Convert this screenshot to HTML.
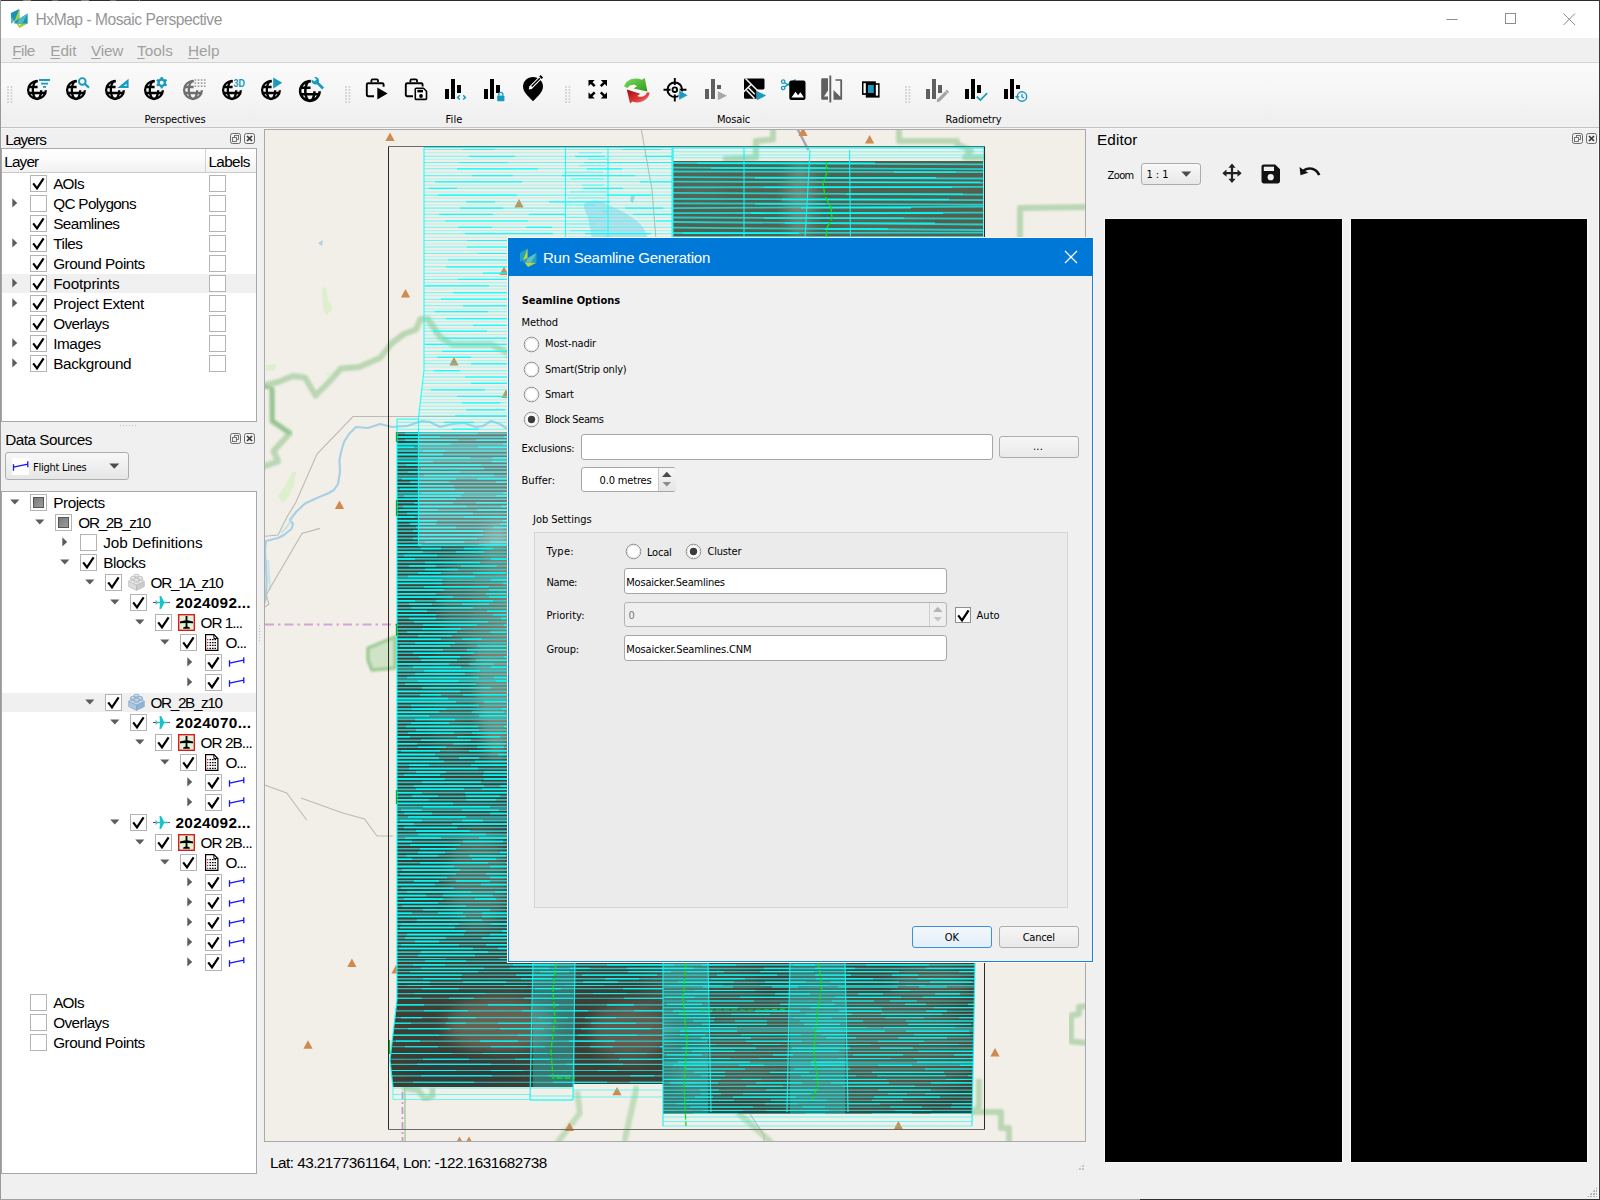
<!DOCTYPE html>
<html lang="en"><head><meta charset="utf-8"><title>HxMap - Mosaic Perspective</title>
<style>
html,body{margin:0;padding:0;}
body{width:1600px;height:1200px;overflow:hidden;background:#f0f0f0;font-family:"Liberation Sans",sans-serif;}
#win{position:absolute;left:0;top:0;width:1600px;height:1200px;overflow:hidden;background:#f0f0f0;}
.t{position:absolute;white-space:nowrap;}
.a{position:absolute;}
svg{position:absolute;overflow:visible;}
.cb{position:absolute;width:15px;height:15px;border:1px solid #b4b4b4;background:#fff;}
.cb svg{left:0;top:0;}
u{text-decoration-thickness:1px;text-underline-offset:2px;}

</style></head>
<body>
<div id="win">
<!-- title bar -->
<div class="" style="position:absolute;left:0px;top:0px;width:1600px;height:38px;background:#fff;"></div>
<div class="" style="position:absolute;left:0px;top:0px;width:1600px;height:1px;background:repeating-linear-gradient(90deg,#3a3a3a 0 23px,#8a8478 23px 31px,#2d2d2d 31px 52px,#6f6a60 52px 58px);"></div>
<div class="" style="position:absolute;left:140px;top:0px;width:1460px;height:1px;background:#2b2b2b;"></div>
<div class="" style="position:absolute;left:0px;top:0px;width:1px;height:1200px;background:#9a9a9a;"></div>
<div class="" style="position:absolute;left:1599px;top:0px;width:1px;height:1200px;background:#3c3c3c;"></div>
<div class="" style="position:absolute;left:1598px;top:38px;width:1px;height:1162px;background:#fafafa;"></div>
<div class="" style="position:absolute;left:0px;top:1199px;width:1600px;height:1px;background:#a2a2a2;"></div>
<div class="" style="position:absolute;left:1140px;top:1199px;width:460px;height:1px;background:#2f2f2f;"></div>
<svg style="left:10px;top:8px" width="19" height="22" viewBox="0 0 19 22">
<polygon points="1,5 9.3,1 9.3,11 1,15.5" fill="#1a93b8"/>
<polygon points="9.3,1 9.3,11 4,14" fill="#9ccf3a"/>
<polygon points="1,9 4.5,12.5 1,15.5" fill="#4fb9c6"/>
<polygon points="6,15 9.6,20 17.6,15.6 17.6,14" fill="#9ccf3a"/>
<polygon points="4.3,13.8 17.6,5.6 17.6,15.6 4.3,15.6" fill="#1a93b8"/>
<polygon points="9.3,10.8 17.6,5.6 12.5,15.6 7,15.6" fill="#4fb9c6"/>
<polygon points="2.3,14.6 4.6,12.4 4.2,14.2" fill="#fff"/>
<polygon points="8.6,16 10.6,16 9.6,17.6" fill="#fff"/>
</svg>
<div class="t " style="left:35.50px;top:8.50px;font-size:15.60px;line-height:22px;height:22px;color:#969696;letter-spacing:-0.463px;">HxMap - Mosaic Perspective</div>
<svg style="left:1440px;top:6px" width="150" height="28" viewBox="0 0 150 28" fill="none" stroke="#8c8c8c" stroke-width="1">
<path d="M6.5 13.5H17.5"/><rect x="65.5" y="7.5" width="10" height="10"/><path d="M123.5 7.5L135 19M135 7.5L123.5 19"/></svg>
<!-- menu bar -->
<div class="" style="position:absolute;left:1px;top:38px;width:1598px;height:24px;background:#f0f0f0;"></div>
<div class="t" style="left:12.3px;top:41px;font-size:15.300px;line-height:20px;color:#a0a0a0;letter-spacing:-0.538px"><u>F</u>ile</div>
<div class="t" style="left:50.3px;top:41px;font-size:15.300px;line-height:20px;color:#a0a0a0;letter-spacing:-0.091px"><u>E</u>dit</div>
<div class="t" style="left:91px;top:41px;font-size:15.300px;line-height:20px;color:#a0a0a0;letter-spacing:-0.222px"><u>V</u>iew</div>
<div class="t" style="left:137px;top:41px;font-size:15.300px;line-height:20px;color:#a0a0a0;letter-spacing:0.056px"><u>T</u>ools</div>
<div class="t" style="left:188px;top:41px;font-size:15.300px;line-height:20px;color:#a0a0a0;letter-spacing:0.008px"><u>H</u>elp</div>
<div class="" style="position:absolute;left:1px;top:62px;width:1598px;height:1px;background:#d4d4d4;"></div>
<!-- tool bar -->
<div class="" style="position:absolute;left:1px;top:63px;width:1598px;height:64px;background:linear-gradient(#fafafa,#f6f6f6 45%,#f0f0f0 85%,#f0f0f0);"></div>
<div class="" style="position:absolute;left:1px;top:127px;width:1598px;height:1px;background:#c4c4c4;"></div>
<div class="" style="position:absolute;left:1px;top:128px;width:1598px;height:1px;background:#f6f6f6;"></div>
<div class="" style="position:absolute;left:7px;top:86px;width:6px;height:18px;background:radial-gradient(circle at 1px 1px,#cfcfcf 0.7px,transparent 0.9px) 0 0/3.500px 3px;"></div>
<div class="" style="position:absolute;left:345px;top:86px;width:6px;height:18px;background:radial-gradient(circle at 1px 1px,#cfcfcf 0.7px,transparent 0.9px) 0 0/3.500px 3px;"></div>
<div class="" style="position:absolute;left:565px;top:86px;width:6px;height:18px;background:radial-gradient(circle at 1px 1px,#cfcfcf 0.7px,transparent 0.9px) 0 0/3.500px 3px;"></div>
<div class="" style="position:absolute;left:905px;top:86px;width:6px;height:18px;background:radial-gradient(circle at 1px 1px,#cfcfcf 0.7px,transparent 0.9px) 0 0/3.500px 3px;"></div>
<svg width="0" height="0"><defs><clipPath id="gc"><path d="M0 0H11.6V12.2H24V24H0Z"/></clipPath></defs></svg>
<svg style="left:26px;top:78px" width="28" height="26" viewBox="0 0 28 26"><g clip-path="url(#gc)" fill="none" stroke="#000" stroke-width="2.3"><circle cx="11" cy="12" r="8.900"/><ellipse cx="11" cy="12" rx="4.2" ry="9"/><path d="M2.3 9H20M2.3 15H20"/></g><path d="M13 1h11v1.9H13zM15 4.7h7v1.7h-7zM17 8.1h3v1.7h-3z" fill="#1a9abf"/></svg>
<svg style="left:65px;top:78px" width="28" height="26" viewBox="0 0 28 26"><g clip-path="url(#gc)" fill="none" stroke="#000" stroke-width="2.3"><circle cx="11" cy="12" r="8.900"/><ellipse cx="11" cy="12" rx="4.2" ry="9"/><path d="M2.3 9H20M2.3 15H20"/></g><circle cx="17.3" cy="3.4" r="3.3" fill="none" stroke="#1a9abf" stroke-width="1.9"/><path d="M19.8 5.9L24 9.6" stroke="#1a9abf" stroke-width="2.1"/></svg>
<svg style="left:104px;top:78px" width="28" height="26" viewBox="0 0 28 26"><g clip-path="url(#gc)" fill="none" stroke="#000" stroke-width="2.3"><circle cx="11" cy="12" r="8.900"/><ellipse cx="11" cy="12" rx="4.2" ry="9"/><path d="M2.3 9H20M2.3 15H20"/></g><path d="M24.6 0.8V10H13.4zM22.6 5.8V8.1H19.8z" fill="#1a9abf" fill-rule="evenodd"/></svg>
<svg style="left:143px;top:78px" width="28" height="26" viewBox="0 0 28 26"><g clip-path="url(#gc)" fill="none" stroke="#000" stroke-width="2.3"><circle cx="11" cy="12" r="8.900"/><ellipse cx="11" cy="12" rx="4.2" ry="9"/><path d="M2.3 9H20M2.3 15H20"/></g><g transform="translate(18.7 4.7)"><circle r="3.2" fill="none" stroke="#1a9abf" stroke-width="2.4"/><rect x="-1.1" y="-5.7" width="2.2" height="2.4" fill="#1a9abf" transform="rotate(0)"/><rect x="-1.1" y="-5.7" width="2.2" height="2.4" fill="#1a9abf" transform="rotate(60)"/><rect x="-1.1" y="-5.7" width="2.2" height="2.4" fill="#1a9abf" transform="rotate(120)"/><rect x="-1.1" y="-5.7" width="2.2" height="2.4" fill="#1a9abf" transform="rotate(180)"/><rect x="-1.1" y="-5.7" width="2.2" height="2.4" fill="#1a9abf" transform="rotate(240)"/><rect x="-1.1" y="-5.7" width="2.2" height="2.4" fill="#1a9abf" transform="rotate(300)"/></g></svg>
<svg style="left:182px;top:78px" width="28" height="26" viewBox="0 0 28 26"><g clip-path="url(#gc)" fill="none" stroke="#6e6e6e" stroke-width="2.3"><circle cx="11" cy="12" r="8.900"/><ellipse cx="11" cy="12" rx="4.2" ry="9"/><path d="M2.3 9H20M2.3 15H20"/></g><rect x="12.6" y="1.2" width="1.6" height="1.6" fill="#9a9a9a"/><rect x="12.6" y="4.3" width="1.6" height="1.6" fill="#9a9a9a"/><rect x="12.6" y="7.4" width="1.6" height="1.6" fill="#9a9a9a"/><rect x="15.7" y="1.2" width="1.6" height="1.6" fill="#9a9a9a"/><rect x="15.7" y="4.3" width="1.6" height="1.6" fill="#9a9a9a"/><rect x="15.7" y="7.4" width="1.6" height="1.6" fill="#9a9a9a"/><rect x="18.8" y="1.2" width="1.6" height="1.6" fill="#9a9a9a"/><rect x="18.8" y="4.3" width="1.6" height="1.6" fill="#9a9a9a"/><rect x="18.8" y="7.4" width="1.6" height="1.6" fill="#9a9a9a"/><rect x="21.9" y="1.2" width="1.6" height="1.6" fill="#9a9a9a"/><rect x="21.9" y="4.3" width="1.6" height="1.6" fill="#9a9a9a"/><rect x="21.9" y="7.4" width="1.6" height="1.6" fill="#9a9a9a"/></svg>
<svg style="left:221px;top:78px" width="28" height="26" viewBox="0 0 28 26"><g clip-path="url(#gc)" fill="none" stroke="#000" stroke-width="2.3"><circle cx="11" cy="12" r="8.900"/><ellipse cx="11" cy="12" rx="4.2" ry="9"/><path d="M2.3 9H20M2.3 15H20"/></g><text x="12.6" y="8.8" font-family="Liberation Sans,sans-serif" font-weight="bold" font-size="10.5" fill="#1a9abf" textLength="11.5" lengthAdjust="spacingAndGlyphs">3D</text></svg>
<svg style="left:260px;top:78px" width="28" height="26" viewBox="0 0 28 26"><g clip-path="url(#gc)" fill="none" stroke="#000" stroke-width="2.3"><circle cx="11" cy="12" r="8.900"/><ellipse cx="11" cy="12" rx="4.2" ry="9"/><path d="M2.3 9H20M2.3 15H20"/></g><path d="M13.2 -0.6L22.2 4.8L13.2 10.4z" fill="#1a9abf"/></svg>
<svg style="left:299px;top:78px" width="28" height="26" viewBox="0 0 28 26"><g transform="translate(-1.2 -0.2) scale(1.1)"><g clip-path="url(#gc)" fill="none" stroke="#000" stroke-width="2.3"><circle cx="11" cy="12" r="8.900"/><ellipse cx="11" cy="12" rx="4.2" ry="9"/><path d="M2.3 9H20M2.3 15H20"/></g></g><path d="M12.6 1.6a3.9 3.9 0 0 0 5.3 4.6l5.3 5.2 1.9-1.9-5.3-5.2a3.9 3.9 0 0 0-4.7-5.2l2.4 2.4-1.9 2z" fill="#1a9abf"/></svg>
<svg style="left:365px;top:78px" width="28" height="26" viewBox="0 0 28 26"><path d="M6.4 4.2V2.6a1.2 1.2 0 0 1 1.2-1.2h4.2a1.2 1.2 0 0 1 1.2 1.2v1.6" fill="none" stroke="#000" stroke-width="1.8"/><path d="M9 18.2H3.2a1.4 1.4 0 0 1-1.4-1.4V6.6a1.4 1.4 0 0 1 1.4-1.4h14a1.4 1.4 0 0 1 1.4 1.4v2.2" fill="none" stroke="#000" stroke-width="1.9"/><path d="M12.3 9.6L22.6 15.6L12.3 21.6z" fill="#000"/></svg>
<svg style="left:404px;top:78px" width="28" height="26" viewBox="0 0 28 26"><path d="M6.4 4.2V2.6a1.2 1.2 0 0 1 1.2-1.2h4.2a1.2 1.2 0 0 1 1.2 1.2v1.6" fill="none" stroke="#000" stroke-width="1.8"/><path d="M9 18.2H3.2a1.4 1.4 0 0 1-1.4-1.4V6.6a1.4 1.4 0 0 1 1.4-1.4h14a1.4 1.4 0 0 1 1.4 1.4v2" fill="none" stroke="#000" stroke-width="1.9"/><path d="M12.2 10.3h7.3l3 3v7.2a.9.9 0 0 1-.9.9h-9.4a.9.9 0 0 1-.9-.9v-9.3a.9.9 0 0 1 .9-.9z" fill="#fff" stroke="#000" stroke-width="1.6"/><rect x="13.4" y="11.8" width="5.6" height="2.6" fill="#000"/><circle cx="17" cy="18" r="1.9" fill="#000"/></svg>
<svg style="left:444px;top:78px" width="28" height="26" viewBox="0 0 28 26"><path d="M1 11h4v10H1zM7 1h4v20H7zM13 7h4v8h-4z" fill="#000"/><path d="M15.8 17.3l-2.2 2.1 2.2 2.1M19.2 17.3l2.2 2.1-2.2 2.1" fill="none" stroke="#1a9abf" stroke-width="1.5"/></svg>
<svg style="left:483px;top:78px" width="28" height="26" viewBox="0 0 28 26"><path d="M1 11h4v10H1zM7 1h4v20H7zM13 7h4v8h-4z" fill="#000"/><rect x="14.2" y="17.4" width="7.2" height="5.8" rx="0.8" fill="#1a9abf"/><path d="M15.8 17.6v-1.2a2 2 0 0 1 4 0v1.2" fill="none" stroke="#1a9abf" stroke-width="1.4"/></svg>
<svg style="left:521px;top:78px" width="30" height="26" viewBox="0 0 30 26"><path d="M12 -1c5.500 0 10 4.200 10 9.600 0 5-4.500 9.500-10 14.600C6.500 18.100 2 13.600 2 8.600 2 3.200 6.500 -1 12 -1z" fill="#000"/><path d="M7.800 11.400l.500-3 9.300-9.300 2.500 2.500-9.300 9.300z" fill="#fff"/><path d="M10.700 8.500l8.200-8.200" stroke="#000" stroke-width="1.500"/><path d="M18.200 -1.600l1.400-1.400 2.500 2.500-1.400 1.400z" fill="#000"/></svg>
<svg style="left:587px;top:78px" width="28" height="26" viewBox="0 0 28 26"><path d="M1.5 2h6.200L5.500 4.200 8.600 7.300 6.800 9.100 3.700 6 1.500 8.200zM20 2v6.200L17.800 6l-3.100 3.100-1.800-1.800L16 4.200 13.800 2zM1.500 20.500v-6.200L3.700 16.500l3.100-3.100 1.800 1.800-3.100 3.100 2.200 2.200zM20 20.500h-6.200l2.200-2.200-3.100-3.100 1.800-1.800 3.100 3.100 2.200-2.200z" fill="#000"/></svg>
<svg style="left:622px;top:78px" width="30" height="28" viewBox="0 0 30 28"><defs><linearGradient id="gg" x1="0" y1="0" x2="1" y2="1"><stop offset="0" stop-color="#7ddc5a"/><stop offset="1" stop-color="#2d9a1e"/></linearGradient><linearGradient id="rg" x1="0" y1="0" x2="1" y2="1"><stop offset="0" stop-color="#9c0d0d"/><stop offset=".6" stop-color="#e03a3a"/><stop offset="1" stop-color="#f29a9a"/></linearGradient></defs><path d="M2.300 8.500C3.500 2 12-1.500 20 1.800l2.800-1.800 2.600 13.600-13.800-3.200 3.300-2.100C12.500 6 8 6.300 5.500 10z" fill="url(#gg)"/><path d="M27.600 14.600C26.800 22 18.500 26.500 10.500 23.500l-2.500 2-3.200-14 13.500 4.200-3 2.200c3.500 1.800 8 1.200 9.600-3.300z" fill="url(#rg)"/></svg>
<svg style="left:665px;top:78px" width="28" height="26" viewBox="0 0 28 26"><circle cx="9.800" cy="11.700" r="7.300" fill="none" stroke="#000" stroke-width="2"/><circle cx="9.800" cy="11.700" r="2.300" fill="none" stroke="#000" stroke-width="1.800"/><path d="M9.800 0v7M9.800 16.500v7M-1.500 11.700h7M14.500 11.700h7" stroke="#000" stroke-width="1.900"/><path d="M13.800 11.900L23.200 17.200L13.800 22.200z" fill="#1a9abf" stroke="#f4f4f4" stroke-width="0.600"/></svg>
<svg style="left:704px;top:78px" width="28" height="26" viewBox="0 0 28 26"><path d="M1 11h4v10H1zM7 1h4v20H7zM13 7h4v4h-4z" fill="#5f5f5f"/><path d="M13.800 13.200L23 17.700L13.800 22.200z" fill="#a8a8a8"/></svg>
<svg style="left:743px;top:78px" width="28" height="26" viewBox="0 0 28 26"><path d="M1 1.800a1.400 1.400 0 0 1 1.400-1.400h17.700a1.400 1.400 0 0 1 1.400 1.400v8.200a1.400 1.400 0 0 1-1.400 1.400h-6.500v9.400H2.400a1.400 1.400 0 0 1-1.400-1.400z" fill="#000"/><path d="M2.500 0.500L15.500 13.500M0.500 14L8.800 5.800M5.500 9.800L11.800 16.200M3.500 12.200L11.500 20.500" stroke="#f6f6f6" stroke-width="1.500" fill="none"/><path d="M13.800 13L23.200 17.600L13.800 22.300z" fill="#1a9abf"/></svg>
<svg style="left:780px;top:78px" width="28" height="26" viewBox="0 0 28 26"><circle cx="3.200" cy="3.600" r="1.700" fill="none" stroke="#1a9abf" stroke-width="1.300"/><circle cx="3.200" cy="10" r="1.700" fill="none" stroke="#1a9abf" stroke-width="1.300"/><path d="M4.500 4.800L13.500 9.500M4.500 8.800L15.500 1.600" stroke="#1a9abf" stroke-width="1.400"/><rect x="9.300" y="2.600" width="16.200" height="19.300" rx="2" fill="#000"/><path d="M11.500 19.500l4-5.700 2.600 3.400 2.300-3 3.600 5.300z" fill="#fff"/></svg>
<svg style="left:821px;top:78px" width="28" height="26" viewBox="0 0 28 26"><path d="M9.300 -2.500v27" stroke="#5f5f5f" stroke-width="1.900"/><path d="M1.500 0.300h5.500v21.500H1.500a1.300 1.300 0 0 1-1.300-1.300V1.600a1.300 1.300 0 0 1 1.300-1.300z" fill="#5f5f5f"/><path d="M3 18.500l4-6v6z" fill="#f4f4f4"/><path d="M14.500 1.200h5.500a1.100 1.100 0 0 1 1.100 1.100v19.500h-8.600v-9.800l6.800 6.800v-16h-4.800z" fill="#5f5f5f"/></svg>
<svg style="left:860px;top:78px" width="28" height="26" viewBox="0 0 28 26"><rect x="2" y="3.300" width="13.800" height="13.600" fill="#000"/><rect x="5.800" y="5.200" width="13.800" height="14.400" fill="#000"/><rect x="3.500" y="5.200" width="2.300" height="10" fill="#fff"/><rect x="15.800" y="6.800" width="2.300" height="10.800" fill="#fff"/><rect x="8" y="7" width="5.800" height="8" fill="#1a9abf"/></svg>
<svg style="left:925px;top:78px" width="28" height="26" viewBox="0 0 28 26"><path d="M1 11h4v10H1zM7 1h4v20H7zM13 7h4v8h-4z" fill="#5f5f5f"/><path d="M12.300 21.300l8-8 2.300 2.300-8 8-2.900.600z" fill="#a4a4a4"/><path d="M20.700 12.800l1-1 2.300 2.300-1 1z" fill="#8c8c8c"/></svg>
<svg style="left:964px;top:78px" width="28" height="26" viewBox="0 0 28 26"><path d="M1 11h4v10H1zM7 1h4v20H7zM13 7h4v8h-4z" fill="#000"/><path d="M12.800 18.700l3.600 3.400 6.800-6.900" fill="none" stroke="#1a9abf" stroke-width="1.700"/></svg>
<svg style="left:1003px;top:78px" width="28" height="26" viewBox="0 0 28 26"><path d="M1 11h4v10H1zM7 1h4v20H7zM13 7h4v4h-4z" fill="#000"/><circle cx="19" cy="18.500" r="4.700" fill="#f2f2f2" stroke="#1a9abf" stroke-width="1.400"/><path d="M19 16v2.800l2 1.200" fill="none" stroke="#1a9abf" stroke-width="1.200"/><path d="M11.800 18l2.400 2.700 2.400-2.700z" fill="#1a9abf"/></svg>
<div class="t " style="left:144.50px;top:111.70px;font-size:11.00px;line-height:15px;height:15px;color:#000;letter-spacing:-0.120px;font-family:'DejaVu Sans Condensed','DejaVu Sans','Liberation Sans',sans-serif;">Perspectives</div>
<div class="t " style="left:445.50px;top:111.70px;font-size:11.00px;line-height:15px;height:15px;color:#000;letter-spacing:0.129px;font-family:'DejaVu Sans Condensed','DejaVu Sans','Liberation Sans',sans-serif;">File</div>
<div class="t " style="left:717.00px;top:111.70px;font-size:11.00px;line-height:15px;height:15px;color:#000;letter-spacing:-0.167px;font-family:'DejaVu Sans Condensed','DejaVu Sans','Liberation Sans',sans-serif;">Mosaic</div>
<div class="t " style="left:945.50px;top:111.70px;font-size:11.00px;line-height:15px;height:15px;color:#000;letter-spacing:-0.132px;font-family:'DejaVu Sans Condensed','DejaVu Sans','Liberation Sans',sans-serif;">Radiometry</div>
<!-- Layers dock -->
<div class="t " style="left:5.30px;top:129.30px;font-size:15.30px;line-height:21px;height:21px;color:#000;letter-spacing:-0.870px;">Layers</div>
<svg style="left:230px;top:133px" width="26" height="11" viewBox="0 0 26 11" fill="none" stroke="#6a6a6a"><rect x="0.5" y="0.5" width="10" height="10" rx="2"/><rect x="4.500" y="2.500" width="4" height="4" stroke-width="0.900"/><rect x="2.500" y="4.500" width="4" height="4" fill="#f0f0f0" stroke-width="0.900"/><rect x="14.500" y="0.500" width="10" height="10" rx="2"/><path d="M17 3l5 5M22 3l-5 5" stroke="#3a3a3a" stroke-width="1.700"/></svg>
<div class="" style="position:absolute;left:1px;top:148px;width:256px;height:274px;border:1px solid #a8a8a8;background:#fff;box-sizing:border-box;"></div>
<div class="" style="position:absolute;left:2px;top:149px;width:254px;height:23px;background:linear-gradient(#fff,#fbfbfb 45%,#f1f1f1);border-bottom:1px solid #c9c9c9;"></div>
<div class="" style="position:absolute;left:205px;top:149px;width:1px;height:23px;background:#d2d2d2;"></div>
<div class="t " style="left:4.30px;top:151.30px;font-size:15.30px;line-height:21px;height:21px;color:#000;letter-spacing:-0.855px;">Layer</div>
<div class="t " style="left:208.40px;top:151.30px;font-size:15.30px;line-height:21px;height:21px;color:#000;letter-spacing:-0.598px;">Labels</div>
<div class="cb" style="left:30px;top:175px"><svg width="15" height="15" viewBox="0 0 15 15"><path d="M2.200 7.300L6 12.400L12.600 2.400" fill="none" stroke="#000" stroke-width="2.200" stroke-linejoin="miter"/></svg></div>
<div class="t " style="left:53.20px;top:173.20px;font-size:15.30px;line-height:21px;height:21px;color:#000;letter-spacing:-0.877px;">AOIs</div>
<div class="cb" style="left:209px;top:175px"></div>
<svg style="left:12px;top:198px" width="6" height="10" viewBox="0 0 6 10"><path d="M0.3 0.2V9.6L5.2 4.900z" fill="#5c5c5c"/></svg>
<div class="cb" style="left:30px;top:195px"></div>
<div class="t " style="left:53.20px;top:193.20px;font-size:15.30px;line-height:21px;height:21px;color:#000;letter-spacing:-0.677px;">QC Polygons</div>
<div class="cb" style="left:209px;top:195px"></div>
<div class="cb" style="left:30px;top:215px"><svg width="15" height="15" viewBox="0 0 15 15"><path d="M2.200 7.300L6 12.400L12.600 2.400" fill="none" stroke="#000" stroke-width="2.200" stroke-linejoin="miter"/></svg></div>
<div class="t " style="left:53.20px;top:213.20px;font-size:15.30px;line-height:21px;height:21px;color:#000;letter-spacing:-0.582px;">Seamlines</div>
<div class="cb" style="left:209px;top:215px"></div>
<svg style="left:12px;top:238px" width="6" height="10" viewBox="0 0 6 10"><path d="M0.3 0.2V9.6L5.2 4.900z" fill="#5c5c5c"/></svg>
<div class="cb" style="left:30px;top:235px"><svg width="15" height="15" viewBox="0 0 15 15"><path d="M2.200 7.300L6 12.400L12.600 2.400" fill="none" stroke="#000" stroke-width="2.200" stroke-linejoin="miter"/></svg></div>
<div class="t " style="left:53.20px;top:233.20px;font-size:15.30px;line-height:21px;height:21px;color:#000;letter-spacing:-0.487px;">Tiles</div>
<div class="cb" style="left:209px;top:235px"></div>
<div class="cb" style="left:30px;top:255px"><svg width="15" height="15" viewBox="0 0 15 15"><path d="M2.200 7.300L6 12.400L12.600 2.400" fill="none" stroke="#000" stroke-width="2.200" stroke-linejoin="miter"/></svg></div>
<div class="t " style="left:53.20px;top:253.20px;font-size:15.30px;line-height:21px;height:21px;color:#000;letter-spacing:-0.477px;">Ground Points</div>
<div class="cb" style="left:209px;top:255px"></div>
<div class="" style="position:absolute;left:2px;top:274px;width:254px;height:19px;background:#f0f0f0;"></div>
<svg style="left:12px;top:278px" width="6" height="10" viewBox="0 0 6 10"><path d="M0.3 0.2V9.6L5.2 4.900z" fill="#5c5c5c"/></svg>
<div class="cb" style="left:30px;top:275px"><svg width="15" height="15" viewBox="0 0 15 15"><path d="M2.200 7.300L6 12.400L12.600 2.400" fill="none" stroke="#000" stroke-width="2.200" stroke-linejoin="miter"/></svg></div>
<div class="t " style="left:53.20px;top:273.20px;font-size:15.30px;line-height:21px;height:21px;color:#000;letter-spacing:-0.183px;">Footprints</div>
<div class="cb" style="left:209px;top:275px"></div>
<svg style="left:12px;top:298px" width="6" height="10" viewBox="0 0 6 10"><path d="M0.3 0.2V9.6L5.2 4.900z" fill="#5c5c5c"/></svg>
<div class="cb" style="left:30px;top:295px"><svg width="15" height="15" viewBox="0 0 15 15"><path d="M2.200 7.300L6 12.400L12.600 2.400" fill="none" stroke="#000" stroke-width="2.200" stroke-linejoin="miter"/></svg></div>
<div class="t " style="left:53.20px;top:293.20px;font-size:15.30px;line-height:21px;height:21px;color:#000;letter-spacing:-0.317px;">Project Extent</div>
<div class="cb" style="left:209px;top:295px"></div>
<div class="cb" style="left:30px;top:315px"><svg width="15" height="15" viewBox="0 0 15 15"><path d="M2.200 7.300L6 12.400L12.600 2.400" fill="none" stroke="#000" stroke-width="2.200" stroke-linejoin="miter"/></svg></div>
<div class="t " style="left:53.20px;top:313.20px;font-size:15.30px;line-height:21px;height:21px;color:#000;letter-spacing:-0.608px;">Overlays</div>
<div class="cb" style="left:209px;top:315px"></div>
<svg style="left:12px;top:338px" width="6" height="10" viewBox="0 0 6 10"><path d="M0.3 0.2V9.6L5.2 4.900z" fill="#5c5c5c"/></svg>
<div class="cb" style="left:30px;top:335px"><svg width="15" height="15" viewBox="0 0 15 15"><path d="M2.200 7.300L6 12.400L12.600 2.400" fill="none" stroke="#000" stroke-width="2.200" stroke-linejoin="miter"/></svg></div>
<div class="t " style="left:53.20px;top:333.20px;font-size:15.30px;line-height:21px;height:21px;color:#000;letter-spacing:-0.429px;">Images</div>
<div class="cb" style="left:209px;top:335px"></div>
<svg style="left:12px;top:358px" width="6" height="10" viewBox="0 0 6 10"><path d="M0.3 0.2V9.6L5.2 4.900z" fill="#5c5c5c"/></svg>
<div class="cb" style="left:30px;top:355px"><svg width="15" height="15" viewBox="0 0 15 15"><path d="M2.200 7.300L6 12.400L12.600 2.400" fill="none" stroke="#000" stroke-width="2.200" stroke-linejoin="miter"/></svg></div>
<div class="t " style="left:53.20px;top:353.20px;font-size:15.30px;line-height:21px;height:21px;color:#000;letter-spacing:-0.356px;">Background</div>
<div class="cb" style="left:209px;top:355px"></div>
<div class="" style="position:absolute;left:120px;top:425px;width:16px;height:1px;background:repeating-linear-gradient(90deg,#c0c0c0 0 1px,transparent 1px 3px);"></div>
<!-- Data Sources dock -->
<div class="t " style="left:5.30px;top:429.30px;font-size:15.30px;line-height:21px;height:21px;color:#000;letter-spacing:-0.516px;">Data Sources</div>
<svg style="left:230px;top:433px" width="26" height="11" viewBox="0 0 26 11" fill="none" stroke="#6a6a6a"><rect x="0.5" y="0.5" width="10" height="10" rx="2"/><rect x="4.500" y="2.500" width="4" height="4" stroke-width="0.900"/><rect x="2.500" y="4.500" width="4" height="4" fill="#f0f0f0" stroke-width="0.900"/><rect x="14.500" y="0.500" width="10" height="10" rx="2"/><path d="M17 3l5 5M22 3l-5 5" stroke="#3a3a3a" stroke-width="1.700"/></svg>
<div class="" style="position:absolute;left:5px;top:452px;width:124px;height:28px;border:1px solid #adadad;border-radius:3px;background:linear-gradient(#f8f8f8,#e6e6e6);box-sizing:border-box;"></div>
<div class="" style="position:absolute;left:12px;top:458px;width:17px;height:17px;background:#fff;"></div>
<svg style="left:12px;top:459.5px" width="17" height="14" viewBox="0 0 17 14"><path d="M1.500 7.200L15.800 4.200M1.500 4.200v6.500M15.800 1.200v6" stroke="#1414ff" stroke-width="1.300" fill="none"/></svg>
<div class="t " style="left:33.00px;top:459.50px;font-size:11.00px;line-height:15px;height:15px;color:#000;letter-spacing:-0.254px;font-family:'DejaVu Sans Condensed','DejaVu Sans','Liberation Sans',sans-serif;">Flight Lines</div>
<svg style="left:109px;top:463px" width="11" height="7" viewBox="0 0 11 7"><path d="M0.300 0.500H10.300L5.300 5.800z" fill="#4c4c4c"/></svg>
<div class="" style="position:absolute;left:1px;top:491px;width:256px;height:683px;border:1px solid #a8a8a8;background:#fff;box-sizing:border-box;"></div>
<svg style="left:10px;top:499px" width="10" height="6" viewBox="0 0 10 6"><path d="M0.2 0.4H9.4L4.8 5.4z" fill="#5c5c5c"/></svg>
<div class="cb" style="left:30px;top:494px"><div style="position:absolute;left:2.300px;top:2.300px;width:8.400px;height:8.400px;border:1px solid #555;background:linear-gradient(135deg,#7a7a7a,#9c9c9c)"></div></div>
<div class="t " style="left:53.30px;top:491.50px;font-size:15.30px;line-height:21px;height:21px;color:#000;letter-spacing:-0.484px;">Projects</div>
<svg style="left:35px;top:519px" width="10" height="6" viewBox="0 0 10 6"><path d="M0.2 0.4H9.4L4.8 5.4z" fill="#5c5c5c"/></svg>
<div class="cb" style="left:55px;top:514px"><div style="position:absolute;left:2.300px;top:2.300px;width:8.400px;height:8.400px;border:1px solid #555;background:linear-gradient(135deg,#7a7a7a,#9c9c9c)"></div></div>
<div class="t " style="left:78.30px;top:511.50px;font-size:15.30px;line-height:21px;height:21px;color:#000;letter-spacing:-1.295px;">OR_2B_z10</div>
<svg style="left:62px;top:537px" width="6" height="10" viewBox="0 0 6 10"><path d="M0.3 0.2V9.6L5.2 4.900z" fill="#5c5c5c"/></svg>
<div class="cb" style="left:80px;top:534px"></div>
<div class="t " style="left:103.30px;top:531.50px;font-size:15.30px;line-height:21px;height:21px;color:#000;letter-spacing:-0.077px;">Job Definitions</div>
<svg style="left:60px;top:559px" width="10" height="6" viewBox="0 0 10 6"><path d="M0.2 0.4H9.4L4.8 5.4z" fill="#5c5c5c"/></svg>
<div class="cb" style="left:80px;top:554px"><svg width="15" height="15" viewBox="0 0 15 15"><path d="M2.200 7.300L6 12.400L12.600 2.400" fill="none" stroke="#000" stroke-width="2.200" stroke-linejoin="miter"/></svg></div>
<div class="t " style="left:103.30px;top:551.50px;font-size:15.30px;line-height:21px;height:21px;color:#000;letter-spacing:-0.511px;">Blocks</div>
<svg style="left:85px;top:579px" width="10" height="6" viewBox="0 0 10 6"><path d="M0.2 0.4H9.4L4.8 5.4z" fill="#5c5c5c"/></svg>
<div class="cb" style="left:105px;top:574px"><svg width="15" height="15" viewBox="0 0 15 15"><path d="M2.200 7.300L6 12.400L12.600 2.400" fill="none" stroke="#000" stroke-width="2.200" stroke-linejoin="miter"/></svg></div>
<svg style="left:128px;top:574px" width="17" height="17" viewBox="0 0 17 17" stroke="#b4b4b4" stroke-width="0.600" stroke-linejoin="round"><path d="M0.700 7.200L8.500 10.800V16.400L0.700 12.600z" fill="#dcdcdc"/><path d="M16.300 7.200L8.500 10.800V16.400L16.300 12.600z" fill="#cbcbcb"/><path d="M8.500 3.400L16.300 7.200L8.500 10.800L0.700 7.200z" fill="#f0f0f0"/><path d="M6 3.3v-1.700a2.500 1.250 0 0 1 5 0v1.700a2.500 1.250 0 0 1-5 0z" fill="#dcdcdc"/><ellipse cx="8.5" cy="1.6" rx="2.500" ry="1.250" fill="#f0f0f0"/><path d="M2.4 5.5v-1.700a2.500 1.250 0 0 1 5 0v1.700a2.500 1.250 0 0 1-5 0z" fill="#dcdcdc"/><ellipse cx="4.9" cy="3.8" rx="2.500" ry="1.250" fill="#f0f0f0"/><path d="M9.6 5.5v-1.700a2.500 1.250 0 0 1 5 0v1.700a2.500 1.250 0 0 1-5 0z" fill="#dcdcdc"/><ellipse cx="12.1" cy="3.8" rx="2.500" ry="1.250" fill="#f0f0f0"/><path d="M6 7.4v-1.700a2.500 1.250 0 0 1 5 0v1.700a2.500 1.250 0 0 1-5 0z" fill="#dcdcdc"/><ellipse cx="8.5" cy="5.7" rx="2.500" ry="1.250" fill="#f0f0f0"/></svg>
<div class="t " style="left:150.50px;top:571.50px;font-size:15.30px;line-height:21px;height:21px;color:#000;letter-spacing:-1.261px;">OR_1A_z10</div>
<svg style="left:110px;top:599px" width="10" height="6" viewBox="0 0 10 6"><path d="M0.2 0.4H9.4L4.8 5.4z" fill="#5c5c5c"/></svg>
<div class="cb" style="left:130px;top:594px"><svg width="15" height="15" viewBox="0 0 15 15"><path d="M2.200 7.300L6 12.400L12.600 2.400" fill="none" stroke="#000" stroke-width="2.200" stroke-linejoin="miter"/></svg></div>
<svg style="left:153px;top:595px" width="17" height="15" viewBox="0 0 17 15"><path d="M0 7.500H17" stroke="#e01010" stroke-width="1"/><path d="M2.500 7.500l1-.800h3.500L6.500 1h1.600l3 5.700h3c1 0 1.600.4 1.600.8s-.6.800-1.600.8h-3l-3 5.700H6.500L7 8.300H3.500z" fill="#19c3c8"/><path d="M2.600 4.500l1.800 3-1.800 3z" fill="#19c3c8"/></svg>
<div class="t " style="left:175.50px;top:591.50px;font-size:15.30px;line-height:21px;height:21px;color:#000;letter-spacing:0.308px;font-weight:bold;">2024092...</div>
<svg style="left:135px;top:619px" width="10" height="6" viewBox="0 0 10 6"><path d="M0.2 0.4H9.4L4.8 5.4z" fill="#5c5c5c"/></svg>
<div class="cb" style="left:155px;top:614px"><svg width="15" height="15" viewBox="0 0 15 15"><path d="M2.200 7.300L6 12.400L12.600 2.400" fill="none" stroke="#000" stroke-width="2.200" stroke-linejoin="miter"/></svg></div>
<svg style="left:178px;top:614px" width="17" height="17" viewBox="0 0 17 17"><rect x="0.700" y="0.700" width="15.600" height="15.600" fill="#dff3d8" stroke="#e01818" stroke-width="1.400"/><path d="M7.600 2h1.800v4.200l5.600 1.300v1.700l-5.600-.3v3.600l2.400.9v1.300H5.200v-1.300l2.400-.9V8.900L2 9.200V7.500l5.600-1.300z" fill="#000"/></svg>
<div class="t " style="left:200.50px;top:611.50px;font-size:15.30px;line-height:21px;height:21px;color:#000;letter-spacing:-0.980px;">OR 1...</div>
<svg style="left:160px;top:639px" width="10" height="6" viewBox="0 0 10 6"><path d="M0.2 0.4H9.4L4.8 5.4z" fill="#5c5c5c"/></svg>
<div class="cb" style="left:180px;top:634px"><svg width="15" height="15" viewBox="0 0 15 15"><path d="M2.200 7.300L6 12.400L12.600 2.400" fill="none" stroke="#000" stroke-width="2.200" stroke-linejoin="miter"/></svg></div>
<svg style="left:205px;top:634px" width="14" height="17" viewBox="0 0 14 17"><path d="M0.600 0.600h8.300l4 4v11.800H0.600z" fill="#fff" stroke="#000" stroke-width="1.200"/><path d="M8.900 0.600v4h4" fill="none" stroke="#000" stroke-width="1"/><rect x="2" y="5" width="1.300" height="1.300" fill="#e01818"/><path d="M4.500 5.65h6.500" stroke="#000" stroke-width="1.200" stroke-dasharray="1.600 0.900"/><rect x="2" y="7.9" width="1.300" height="1.300" fill="#e01818"/><path d="M4.500 8.55h6.500" stroke="#000" stroke-width="1.200" stroke-dasharray="1.600 0.900"/><rect x="2" y="10.8" width="1.300" height="1.300" fill="#e01818"/><path d="M4.500 11.45h6.500" stroke="#000" stroke-width="1.200" stroke-dasharray="1.600 0.900"/><rect x="2" y="13.7" width="1.300" height="1.300" fill="#e01818"/><path d="M4.500 14.35h6.500" stroke="#000" stroke-width="1.200" stroke-dasharray="1.600 0.900"/></svg>
<div class="t " style="left:225.50px;top:631.50px;font-size:15.30px;line-height:21px;height:21px;color:#000;letter-spacing:-1.088px;">O...</div>
<svg style="left:187px;top:657px" width="6" height="10" viewBox="0 0 6 10"><path d="M0.3 0.2V9.6L5.2 4.900z" fill="#5c5c5c"/></svg>
<div class="cb" style="left:205px;top:654px"><svg width="15" height="15" viewBox="0 0 15 15"><path d="M2.200 7.300L6 12.400L12.600 2.400" fill="none" stroke="#000" stroke-width="2.200" stroke-linejoin="miter"/></svg></div>
<svg style="left:228px;top:655.5px" width="17" height="14" viewBox="0 0 17 14"><path d="M1.500 7.200L15.800 4.200M1.500 4.200v6.500M15.800 1.200v6" stroke="#1414ff" stroke-width="1.300" fill="none"/></svg>
<svg style="left:187px;top:677px" width="6" height="10" viewBox="0 0 6 10"><path d="M0.3 0.2V9.6L5.2 4.900z" fill="#5c5c5c"/></svg>
<div class="cb" style="left:205px;top:674px"><svg width="15" height="15" viewBox="0 0 15 15"><path d="M2.200 7.300L6 12.400L12.600 2.400" fill="none" stroke="#000" stroke-width="2.200" stroke-linejoin="miter"/></svg></div>
<svg style="left:228px;top:675.5px" width="17" height="14" viewBox="0 0 17 14"><path d="M1.500 7.200L15.800 4.200M1.500 4.200v6.500M15.800 1.200v6" stroke="#1414ff" stroke-width="1.300" fill="none"/></svg>
<div class="" style="position:absolute;left:2px;top:693px;width:254px;height:19px;background:#f0f0f0;"></div>
<svg style="left:85px;top:699px" width="10" height="6" viewBox="0 0 10 6"><path d="M0.2 0.4H9.4L4.8 5.4z" fill="#5c5c5c"/></svg>
<div class="cb" style="left:105px;top:694px"><svg width="15" height="15" viewBox="0 0 15 15"><path d="M2.200 7.300L6 12.400L12.600 2.400" fill="none" stroke="#000" stroke-width="2.200" stroke-linejoin="miter"/></svg></div>
<svg style="left:128px;top:694px" width="17" height="17" viewBox="0 0 17 17" stroke="#7f9fc0" stroke-width="0.600" stroke-linejoin="round"><path d="M0.700 7.200L8.500 10.800V16.400L0.700 12.600z" fill="#a9c6e2"/><path d="M16.300 7.200L8.500 10.800V16.400L16.300 12.600z" fill="#8fb3d6"/><path d="M8.500 3.400L16.300 7.200L8.500 10.800L0.700 7.200z" fill="#cfe0f0"/><path d="M6 3.3v-1.700a2.500 1.250 0 0 1 5 0v1.700a2.500 1.250 0 0 1-5 0z" fill="#a9c6e2"/><ellipse cx="8.5" cy="1.6" rx="2.500" ry="1.250" fill="#cfe0f0"/><path d="M2.4 5.5v-1.700a2.500 1.250 0 0 1 5 0v1.700a2.500 1.250 0 0 1-5 0z" fill="#a9c6e2"/><ellipse cx="4.9" cy="3.8" rx="2.500" ry="1.250" fill="#cfe0f0"/><path d="M9.6 5.5v-1.700a2.500 1.250 0 0 1 5 0v1.700a2.500 1.250 0 0 1-5 0z" fill="#a9c6e2"/><ellipse cx="12.1" cy="3.8" rx="2.500" ry="1.250" fill="#cfe0f0"/><path d="M6 7.4v-1.700a2.500 1.250 0 0 1 5 0v1.700a2.500 1.250 0 0 1-5 0z" fill="#a9c6e2"/><ellipse cx="8.5" cy="5.7" rx="2.500" ry="1.250" fill="#cfe0f0"/></svg>
<div class="t " style="left:150.50px;top:691.50px;font-size:15.30px;line-height:21px;height:21px;color:#000;letter-spacing:-1.350px;">OR_2B_z10</div>
<svg style="left:110px;top:719px" width="10" height="6" viewBox="0 0 10 6"><path d="M0.2 0.4H9.4L4.8 5.4z" fill="#5c5c5c"/></svg>
<div class="cb" style="left:130px;top:714px"><svg width="15" height="15" viewBox="0 0 15 15"><path d="M2.200 7.300L6 12.400L12.600 2.400" fill="none" stroke="#000" stroke-width="2.200" stroke-linejoin="miter"/></svg></div>
<svg style="left:153px;top:715px" width="17" height="15" viewBox="0 0 17 15"><path d="M0 7.500H17" stroke="#e01010" stroke-width="1"/><path d="M2.500 7.500l1-.800h3.500L6.500 1h1.600l3 5.700h3c1 0 1.600.4 1.600.8s-.6.800-1.600.8h-3l-3 5.700H6.500L7 8.300H3.500z" fill="#19c3c8"/><path d="M2.600 4.500l1.800 3-1.800 3z" fill="#19c3c8"/></svg>
<div class="t " style="left:175.50px;top:711.50px;font-size:15.30px;line-height:21px;height:21px;color:#000;letter-spacing:0.368px;font-weight:bold;">2024070...</div>
<svg style="left:135px;top:739px" width="10" height="6" viewBox="0 0 10 6"><path d="M0.2 0.4H9.4L4.8 5.4z" fill="#5c5c5c"/></svg>
<div class="cb" style="left:155px;top:734px"><svg width="15" height="15" viewBox="0 0 15 15"><path d="M2.200 7.300L6 12.400L12.600 2.400" fill="none" stroke="#000" stroke-width="2.200" stroke-linejoin="miter"/></svg></div>
<svg style="left:178px;top:734px" width="17" height="17" viewBox="0 0 17 17"><rect x="0.700" y="0.700" width="15.600" height="15.600" fill="#dff3d8" stroke="#e01818" stroke-width="1.400"/><path d="M7.600 2h1.800v4.200l5.600 1.300v1.700l-5.600-.3v3.600l2.400.9v1.300H5.200v-1.300l2.400-.9V8.900L2 9.200V7.500l5.600-1.300z" fill="#000"/></svg>
<div class="t " style="left:200.50px;top:731.50px;font-size:15.30px;line-height:21px;height:21px;color:#000;letter-spacing:-0.908px;">OR 2B...</div>
<svg style="left:160px;top:759px" width="10" height="6" viewBox="0 0 10 6"><path d="M0.2 0.4H9.4L4.8 5.4z" fill="#5c5c5c"/></svg>
<div class="cb" style="left:180px;top:754px"><svg width="15" height="15" viewBox="0 0 15 15"><path d="M2.200 7.300L6 12.400L12.600 2.400" fill="none" stroke="#000" stroke-width="2.200" stroke-linejoin="miter"/></svg></div>
<svg style="left:205px;top:754px" width="14" height="17" viewBox="0 0 14 17"><path d="M0.600 0.600h8.300l4 4v11.800H0.600z" fill="#fff" stroke="#000" stroke-width="1.200"/><path d="M8.900 0.600v4h4" fill="none" stroke="#000" stroke-width="1"/><rect x="2" y="5" width="1.300" height="1.300" fill="#e01818"/><path d="M4.500 5.65h6.500" stroke="#000" stroke-width="1.200" stroke-dasharray="1.600 0.900"/><rect x="2" y="7.9" width="1.300" height="1.300" fill="#e01818"/><path d="M4.500 8.55h6.500" stroke="#000" stroke-width="1.200" stroke-dasharray="1.600 0.900"/><rect x="2" y="10.8" width="1.300" height="1.300" fill="#e01818"/><path d="M4.500 11.45h6.500" stroke="#000" stroke-width="1.200" stroke-dasharray="1.600 0.900"/><rect x="2" y="13.7" width="1.300" height="1.300" fill="#e01818"/><path d="M4.500 14.35h6.500" stroke="#000" stroke-width="1.200" stroke-dasharray="1.600 0.900"/></svg>
<div class="t " style="left:225.50px;top:751.50px;font-size:15.30px;line-height:21px;height:21px;color:#000;letter-spacing:-1.088px;">O...</div>
<svg style="left:187px;top:777px" width="6" height="10" viewBox="0 0 6 10"><path d="M0.3 0.2V9.6L5.2 4.900z" fill="#5c5c5c"/></svg>
<div class="cb" style="left:205px;top:774px"><svg width="15" height="15" viewBox="0 0 15 15"><path d="M2.200 7.300L6 12.400L12.600 2.400" fill="none" stroke="#000" stroke-width="2.200" stroke-linejoin="miter"/></svg></div>
<svg style="left:228px;top:775.5px" width="17" height="14" viewBox="0 0 17 14"><path d="M1.500 7.200L15.800 4.200M1.500 4.200v6.500M15.800 1.200v6" stroke="#1414ff" stroke-width="1.300" fill="none"/></svg>
<svg style="left:187px;top:797px" width="6" height="10" viewBox="0 0 6 10"><path d="M0.3 0.2V9.6L5.2 4.900z" fill="#5c5c5c"/></svg>
<div class="cb" style="left:205px;top:794px"><svg width="15" height="15" viewBox="0 0 15 15"><path d="M2.200 7.300L6 12.400L12.600 2.400" fill="none" stroke="#000" stroke-width="2.200" stroke-linejoin="miter"/></svg></div>
<svg style="left:228px;top:795.5px" width="17" height="14" viewBox="0 0 17 14"><path d="M1.500 7.200L15.800 4.200M1.500 4.200v6.500M15.800 1.200v6" stroke="#1414ff" stroke-width="1.300" fill="none"/></svg>
<svg style="left:110px;top:819px" width="10" height="6" viewBox="0 0 10 6"><path d="M0.2 0.4H9.4L4.8 5.4z" fill="#5c5c5c"/></svg>
<div class="cb" style="left:130px;top:814px"><svg width="15" height="15" viewBox="0 0 15 15"><path d="M2.200 7.300L6 12.400L12.600 2.400" fill="none" stroke="#000" stroke-width="2.200" stroke-linejoin="miter"/></svg></div>
<svg style="left:153px;top:815px" width="17" height="15" viewBox="0 0 17 15"><path d="M0 7.500H17" stroke="#e01010" stroke-width="1"/><path d="M2.500 7.500l1-.800h3.500L6.500 1h1.600l3 5.700h3c1 0 1.600.4 1.600.8s-.6.800-1.600.8h-3l-3 5.700H6.500L7 8.300H3.500z" fill="#19c3c8"/><path d="M2.600 4.500l1.800 3-1.800 3z" fill="#19c3c8"/></svg>
<div class="t " style="left:175.50px;top:811.50px;font-size:15.30px;line-height:21px;height:21px;color:#000;letter-spacing:0.308px;font-weight:bold;">2024092...</div>
<svg style="left:135px;top:839px" width="10" height="6" viewBox="0 0 10 6"><path d="M0.2 0.4H9.4L4.8 5.4z" fill="#5c5c5c"/></svg>
<div class="cb" style="left:155px;top:834px"><svg width="15" height="15" viewBox="0 0 15 15"><path d="M2.200 7.300L6 12.400L12.600 2.400" fill="none" stroke="#000" stroke-width="2.200" stroke-linejoin="miter"/></svg></div>
<svg style="left:178px;top:834px" width="17" height="17" viewBox="0 0 17 17"><rect x="0.700" y="0.700" width="15.600" height="15.600" fill="#dff3d8" stroke="#e01818" stroke-width="1.400"/><path d="M7.600 2h1.800v4.200l5.600 1.300v1.700l-5.600-.3v3.600l2.400.9v1.300H5.200v-1.300l2.400-.9V8.900L2 9.200V7.500l5.600-1.300z" fill="#000"/></svg>
<div class="t " style="left:200.50px;top:831.50px;font-size:15.30px;line-height:21px;height:21px;color:#000;letter-spacing:-0.908px;">OR 2B...</div>
<svg style="left:160px;top:859px" width="10" height="6" viewBox="0 0 10 6"><path d="M0.2 0.4H9.4L4.8 5.4z" fill="#5c5c5c"/></svg>
<div class="cb" style="left:180px;top:854px"><svg width="15" height="15" viewBox="0 0 15 15"><path d="M2.200 7.300L6 12.400L12.600 2.400" fill="none" stroke="#000" stroke-width="2.200" stroke-linejoin="miter"/></svg></div>
<svg style="left:205px;top:854px" width="14" height="17" viewBox="0 0 14 17"><path d="M0.600 0.600h8.300l4 4v11.800H0.600z" fill="#fff" stroke="#000" stroke-width="1.200"/><path d="M8.900 0.600v4h4" fill="none" stroke="#000" stroke-width="1"/><rect x="2" y="5" width="1.300" height="1.300" fill="#e01818"/><path d="M4.500 5.65h6.500" stroke="#000" stroke-width="1.200" stroke-dasharray="1.600 0.900"/><rect x="2" y="7.9" width="1.300" height="1.300" fill="#e01818"/><path d="M4.500 8.55h6.500" stroke="#000" stroke-width="1.200" stroke-dasharray="1.600 0.900"/><rect x="2" y="10.8" width="1.300" height="1.300" fill="#e01818"/><path d="M4.500 11.45h6.500" stroke="#000" stroke-width="1.200" stroke-dasharray="1.600 0.900"/><rect x="2" y="13.7" width="1.300" height="1.300" fill="#e01818"/><path d="M4.500 14.35h6.500" stroke="#000" stroke-width="1.200" stroke-dasharray="1.600 0.900"/></svg>
<div class="t " style="left:225.50px;top:851.50px;font-size:15.30px;line-height:21px;height:21px;color:#000;letter-spacing:-1.088px;">O...</div>
<svg style="left:187px;top:877px" width="6" height="10" viewBox="0 0 6 10"><path d="M0.3 0.2V9.6L5.2 4.900z" fill="#5c5c5c"/></svg>
<div class="cb" style="left:205px;top:874px"><svg width="15" height="15" viewBox="0 0 15 15"><path d="M2.200 7.300L6 12.400L12.600 2.400" fill="none" stroke="#000" stroke-width="2.200" stroke-linejoin="miter"/></svg></div>
<svg style="left:228px;top:875.5px" width="17" height="14" viewBox="0 0 17 14"><path d="M1.500 7.200L15.800 4.200M1.500 4.200v6.500M15.800 1.200v6" stroke="#1414ff" stroke-width="1.300" fill="none"/></svg>
<svg style="left:187px;top:897px" width="6" height="10" viewBox="0 0 6 10"><path d="M0.3 0.2V9.6L5.2 4.900z" fill="#5c5c5c"/></svg>
<div class="cb" style="left:205px;top:894px"><svg width="15" height="15" viewBox="0 0 15 15"><path d="M2.200 7.300L6 12.400L12.600 2.400" fill="none" stroke="#000" stroke-width="2.200" stroke-linejoin="miter"/></svg></div>
<svg style="left:228px;top:895.5px" width="17" height="14" viewBox="0 0 17 14"><path d="M1.500 7.200L15.800 4.200M1.500 4.200v6.500M15.800 1.200v6" stroke="#1414ff" stroke-width="1.300" fill="none"/></svg>
<svg style="left:187px;top:917px" width="6" height="10" viewBox="0 0 6 10"><path d="M0.3 0.2V9.6L5.2 4.900z" fill="#5c5c5c"/></svg>
<div class="cb" style="left:205px;top:914px"><svg width="15" height="15" viewBox="0 0 15 15"><path d="M2.200 7.300L6 12.400L12.600 2.400" fill="none" stroke="#000" stroke-width="2.200" stroke-linejoin="miter"/></svg></div>
<svg style="left:228px;top:915.5px" width="17" height="14" viewBox="0 0 17 14"><path d="M1.500 7.200L15.800 4.200M1.500 4.200v6.500M15.800 1.200v6" stroke="#1414ff" stroke-width="1.300" fill="none"/></svg>
<svg style="left:187px;top:937px" width="6" height="10" viewBox="0 0 6 10"><path d="M0.3 0.2V9.6L5.2 4.900z" fill="#5c5c5c"/></svg>
<div class="cb" style="left:205px;top:934px"><svg width="15" height="15" viewBox="0 0 15 15"><path d="M2.200 7.300L6 12.400L12.600 2.400" fill="none" stroke="#000" stroke-width="2.200" stroke-linejoin="miter"/></svg></div>
<svg style="left:228px;top:935.5px" width="17" height="14" viewBox="0 0 17 14"><path d="M1.500 7.200L15.800 4.200M1.500 4.200v6.500M15.800 1.200v6" stroke="#1414ff" stroke-width="1.300" fill="none"/></svg>
<svg style="left:187px;top:957px" width="6" height="10" viewBox="0 0 6 10"><path d="M0.3 0.2V9.6L5.2 4.900z" fill="#5c5c5c"/></svg>
<div class="cb" style="left:205px;top:954px"><svg width="15" height="15" viewBox="0 0 15 15"><path d="M2.200 7.300L6 12.400L12.600 2.400" fill="none" stroke="#000" stroke-width="2.200" stroke-linejoin="miter"/></svg></div>
<svg style="left:228px;top:955.5px" width="17" height="14" viewBox="0 0 17 14"><path d="M1.500 7.200L15.800 4.200M1.500 4.200v6.500M15.800 1.200v6" stroke="#1414ff" stroke-width="1.300" fill="none"/></svg>
<div class="cb" style="left:30px;top:994px"></div>
<div class="t " style="left:53.20px;top:992.20px;font-size:15.30px;line-height:21px;height:21px;color:#000;letter-spacing:-0.877px;">AOIs</div>
<div class="cb" style="left:30px;top:1014px"></div>
<div class="t " style="left:53.20px;top:1012.20px;font-size:15.30px;line-height:21px;height:21px;color:#000;letter-spacing:-0.608px;">Overlays</div>
<div class="cb" style="left:30px;top:1034px"></div>
<div class="t " style="left:53.20px;top:1032.20px;font-size:15.30px;line-height:21px;height:21px;color:#000;letter-spacing:-0.477px;">Ground Points</div>
<div class="t " style="left:270.00px;top:1152.20px;font-size:15.30px;line-height:21px;height:21px;color:#000;letter-spacing:-0.520px;">Lat: 43.2177361164, Lon: -122.1631682738</div>
<!-- map view -->
<div class="" style="position:absolute;left:264px;top:129px;width:822px;height:1013px;border:1px solid #a9a9a9;box-sizing:border-box;background:#f2efe9;"></div>
<svg style="left:265px;top:130px" width="820" height="1011" viewBox="265 130 820 1011"><defs><clipPath id="mc"><rect x="265" y="130" width="820" height="1011"/></clipPath><filter id="b6" x="-30%" y="-30%" width="160%" height="160%"><feGaussianBlur stdDeviation="7"/></filter><filter id="b2" x="-30%" y="-30%" width="160%" height="160%"><feGaussianBlur stdDeviation="2.2"/></filter><filter id="b1" x="-10%" y="-10%" width="120%" height="120%"><feGaussianBlur stdDeviation="0.8"/></filter><clipPath id="imgC"><path d="M397 432H509V960H975L972 1114H663V1084H573V1087H393L390 1060L397 1000Z"/></clipPath><clipPath id="imgB"><rect x="673" y="161" width="310" height="80"/></clipPath></defs><g clip-path="url(#mc)"><rect x="265" y="130" width="821" height="1011" fill="#f2efe9"/><path d="M262 385L266 385L278 382L293 376L305 377.500L315.500 395.500L329 382L341 368.500L359 367L380 358L392 343L404 334L416 329.500L420.500 319L428 319L440 337L452 344.500L470 344.500L491 344.500L506 352L512 354" fill="none" stroke="#a3cc9b" stroke-opacity="0.7" stroke-width="6" stroke-linejoin="round" filter="url(#b1)"/><path d="M272 388L272 421L290 433L273.500 451L278 461.500L262 467" fill="none" stroke="#a3cc9b" stroke-opacity="0.7" stroke-width="6" stroke-linejoin="round" filter="url(#b1)"/><path d="M723 159L756 157.500L756 141L773 139.600L773 128" fill="none" stroke="#a3cc9b" stroke-opacity="0.7" stroke-width="6" stroke-linejoin="round" filter="url(#b1)"/><path d="M899 128L899 141L957 141L957 144L971 150.600L965 157.500L985 157.500" fill="none" stroke="#a3cc9b" stroke-opacity="0.7" stroke-width="6" stroke-linejoin="round" filter="url(#b1)"/><path d="M1020 240L1020 208L1088 207" fill="none" stroke="#a3cc9b" stroke-opacity="0.7" stroke-width="6" stroke-linejoin="round" filter="url(#b1)"/><path d="M1088 1006L1079 1007L1079 1014L1071 1015.500L1071 1041.600L1088 1043" fill="none" stroke="#a3cc9b" stroke-opacity="0.7" stroke-width="6" stroke-linejoin="round" filter="url(#b1)"/><path d="M979 1079L979 1106L973.500 1112L1001 1112L1001 1128L1009 1128L1009 1143" fill="none" stroke="#a3cc9b" stroke-opacity="0.7" stroke-width="6" stroke-linejoin="round" filter="url(#b1)"/><path d="M402.500 1088L418 1090L425 1099L432.600 1096L432.600 1088" fill="none" stroke="#a3cc9b" stroke-opacity="0.7" stroke-width="6" stroke-linejoin="round" filter="url(#b1)"/><path d="M404.500 1088L405.500 1143" fill="none" stroke="#a3cc9b" stroke-opacity="0.7" stroke-width="6" stroke-linejoin="round" filter="url(#b1)"/><path d="M262 386.500L272 388L272.500 421L290 433.500" fill="none" stroke="#86b980" stroke-opacity=".75" stroke-width="3" filter="url(#b1)"/><path d="M577 1091L580 1113L557 1143" fill="none" stroke="#b5d7ac" stroke-opacity=".8" stroke-width="6" filter="url(#b1)"/><path d="M637 1086L624 1143" fill="none" stroke="#b5d7ac" stroke-opacity=".8" stroke-width="6" filter="url(#b1)"/><path d="M735 1110L772 1143" fill="none" stroke="#b5d7ac" stroke-opacity=".8" stroke-width="6" filter="url(#b1)"/><path d="M368 648L395 637L395 668L372 670L368 660Z" fill="#cfe4c6" stroke="#9fca97" stroke-width="3.500" stroke-linejoin="round" filter="url(#b1)"/><polygon points="322,288 326,287 328,300 333,308 326,316 323,308" fill="#d9efc9" opacity=".85"/><polygon points="266,365 276,364 275,370 266,371" fill="#d9efc9" opacity=".85"/><polygon points="324.500,372 332,374 330,378" fill="#d9efc9" opacity=".85"/><polygon points="292,472 296,472 294,486 288,498 282,503 278,496 286,484" fill="#d9efc9" opacity=".85"/><path d="M512 431L509 430L500 424L491 421L483 426L476 427L464 423L452 424L440 427L430 422L422 421L407 426L392 427L380 424L368 428L356 427L349 434L344 442L341 452L339.500 460L340 472L338 484L334 490L329 493L317 498L305 503.500L296 512L290 520L293 524L291.500 529L284 535L278 538L266 541L265 550L266.600 580L266 598L262 610" fill="none" stroke="#a9d0e2" stroke-width="2.200" stroke-linejoin="round"/><path d="M292 519L286 528L281 533M268 560L270 590" fill="none" stroke="#b9dbe8" stroke-width="2" opacity=".7"/><path d="M512 416.500H353L317 454L296 502L287 517L278 535L262 536.500" fill="none" stroke="#bdbab4" stroke-width="1.100"/><path d="M320 528.400L302 533.500L266 595L269 604L262 609" fill="none" stroke="#bdbab4" stroke-width="1.100"/><path d="M262 784L286.700 793L306.700 820" fill="none" stroke="#bdbab4" stroke-width="1.100"/><path d="M301 798L342 812.700L364.500 819L377 836L393 836" fill="none" stroke="#bdbab4" stroke-width="1.100"/><path d="M641 128L645 150L652 190L656 240" fill="none" stroke="#bdbab4" stroke-width="1.100"/><path d="M797 128L808 150" fill="none" stroke="#bdbab4" stroke-width="1.100"/><path d="M750 1114L764 1135V1143" fill="none" stroke="#bdbab4" stroke-width="1.100"/><path d="M797 128L808.500 150" stroke="#9a8fa8" stroke-width="2.500" opacity=".7"/><path d="M265 624.500H398" stroke="#d3a4d8" stroke-width="2" stroke-dasharray="9 4 2.500 4"/><path d="M402.500 1092V1143" stroke="#c79acc" stroke-width="1.800" stroke-dasharray="7 3 2 3"/><path d="M584 204C590 199 600 200 606 204C614 208 628 212 640 224C646 230 648 238 650 246H592C592 236 590 226 588 218C586 212 583 208 584 204Z" fill="#b4dbe6" opacity=".85"/><path d="M631 196l4-1-2 8-3-2z" fill="#aad3df"/><path d="M318 243l5-3-1 6z" fill="#aad3df"/><path d="M390 132.5l4.600 8.400h-9.200z" fill="#cf8a4f"/><path d="M519 199l4.600 8.400h-9.200z" fill="#cf8a4f"/><path d="M405.5 289l4.600 8.400h-9.200z" fill="#cf8a4f"/><path d="M504 266.5l4.600 8.400h-9.200z" fill="#cf8a4f"/><path d="M454 357.1l4.600 8.400h-9.200z" fill="#cf8a4f"/><path d="M506 389.5l4.600 8.400h-9.200z" fill="#cf8a4f"/><path d="M803 127.5l4.600 8.400h-9.200z" fill="#cf8a4f"/><path d="M869.6 135.1l4.600 8.400h-9.200z" fill="#cf8a4f"/><path d="M339.5 500.5l4.600 8.400h-9.200z" fill="#cf8a4f"/><path d="M351.9 958.5l4.600 8.400h-9.200z" fill="#cf8a4f"/><path d="M308 1040.3l4.600 8.400h-9.200z" fill="#cf8a4f"/><path d="M617 1086.9l4.600 8.400h-9.200z" fill="#cf8a4f"/><path d="M569.5 1122.5l4.600 8.400h-9.200z" fill="#cf8a4f"/><path d="M459.5 1136.5l4.600 8.400h-9.200z" fill="#cf8a4f"/><path d="M469 1136.5l4.600 8.400h-9.200z" fill="#cf8a4f"/><path d="M995 1048.1l4.600 8.400h-9.200z" fill="#cf8a4f"/><path d="M898.4 1121l4.600 8.400h-9.200z" fill="#cf8a4f"/><path d="M396 965l4.600 8.400h-9.200z" fill="#cf8a4f"/><g clip-path="url(#imgC)"><rect x="385" y="430" width="600" height="700" fill="#403e34"/><ellipse cx="497" cy="640" rx="26" ry="120" fill="#92826f" opacity="0.9" filter="url(#b6)"/><ellipse cx="470" cy="600" rx="30" ry="50" fill="#6f6a5c" opacity="0.7" filter="url(#b6)"/><ellipse cx="478" cy="880" rx="30" ry="50" fill="#7b7363" opacity="0.6" filter="url(#b6)"/><ellipse cx="430" cy="520" rx="30" ry="40" fill="#3a4139" opacity="0.8" filter="url(#b6)"/><ellipse cx="420" cy="800" rx="25" ry="70" fill="#363d36" opacity="0.8" filter="url(#b6)"/><ellipse cx="500" cy="1025" rx="55" ry="28" fill="#8d7d69" opacity="0.55" filter="url(#b6)"/><ellipse cx="630" cy="1030" rx="40" ry="30" fill="#85786a" opacity="0.5" filter="url(#b6)"/><ellipse cx="460" cy="1070" rx="60" ry="14" fill="#2f3a3a" opacity="0.8" filter="url(#b6)"/><ellipse cx="750" cy="1000" rx="60" ry="30" fill="#3a4038" opacity="0.8" filter="url(#b6)"/><ellipse cx="880" cy="1040" rx="70" ry="40" fill="#5d5b4d" opacity="0.7" filter="url(#b6)"/><ellipse cx="930" cy="985" rx="40" ry="20" fill="#6e6857" opacity="0.6" filter="url(#b6)"/><ellipse cx="720" cy="1075" rx="50" ry="20" fill="#6b6555" opacity="0.6" filter="url(#b6)"/><ellipse cx="840" cy="1050" rx="140" ry="60" fill="#58584a" opacity="0.75" filter="url(#b6)"/><ellipse cx="700" cy="990" rx="60" ry="30" fill="#55554a" opacity="0.6" filter="url(#b6)"/><ellipse cx="450" cy="700" rx="20" ry="60" fill="#55564a" opacity="0.7" filter="url(#b6)"/><ellipse cx="600" cy="985" rx="40" ry="18" fill="#3b4038" opacity="0.7" filter="url(#b6)"/></g><g clip-path="url(#imgB)"><rect x="673" y="161" width="310" height="80" fill="#5a5946"/><ellipse cx="800" cy="200" rx="14" ry="40" fill="#8d8674" opacity="0.8" filter="url(#b6)"/><ellipse cx="700" cy="190" rx="25" ry="14" fill="#5d6354" opacity="0.7" filter="url(#b6)"/><ellipse cx="900" cy="190" rx="60" ry="20" fill="#5b5847" opacity="0.7" filter="url(#b6)"/><ellipse cx="880" cy="225" rx="50" ry="10" fill="#666150" opacity="0.7" filter="url(#b6)"/></g><path d="M424.0 149.5H672M424.0 156.3H672M424.0 162.5H672M424.0 168.8H672M424.0 175.6H672M424.0 181.8H672M424.0 188.3H672M424.0 195.1H672M424.0 201.8H672M424.0 208.1H672M424.0 214.3H672M424.0 221.0H672M424.0 227.3H672M424.0 233.7H672M424.0 240.5H672M424.0 247.0H672M424.0 253.5H672M424.0 260.0H672M424.0 266.8H672M424.0 273.2H672M424.0 279.4H672M424.0 285.9H672M424.0 292.7H672M424.0 299.2H672M424.0 305.8H672M424.0 311.7H672M424.0 318.7H672M424.0 325.3H672M424.0 331.2H672M424.0 338.2H672M424.0 344.3H672M424.0 351.3H672M424.0 357.3H672M424.0 363.8H672M423.9 370.7H672M423.1 377.0H672M422.4 383.3H672M421.6 389.8H672M420.8 396.3H672M420.0 402.8H672M419.1 409.8H672M418.4 415.9H672M397.0 422.3H672M397.0 429.2H672" stroke="#00ffff" stroke-opacity=".6" stroke-width="1.050" fill="none"/><path d="M424.0 152.8H672M424.0 159.2H672M424.0 165.8H672M424.0 172.3H672M424.0 178.9H672M424.0 185.1H672M424.0 191.9H672M424.0 198.0H672M424.0 205.0H672M424.0 211.3H672M424.0 217.5H672M424.0 224.0H672M424.0 230.6H672M424.0 237.2H672M424.0 244.0H672M424.0 250.3H672M424.0 256.8H672M424.0 263.1H672M424.0 270.0H672M424.0 276.4H672M424.0 282.6H672M424.0 289.0H672M424.0 295.7H672M424.0 302.2H672M424.0 309.0H672M424.0 315.1H672M424.0 321.7H672M424.0 328.2H672M424.0 334.8H672M424.0 341.1H672M424.0 347.6H672M424.0 354.4H672M424.0 360.6H672M424.0 367.0H672M423.6 373.6H672M422.8 380.2H672M421.9 386.9H672M421.1 393.3H672M420.4 399.7H672M419.6 406.1H672M418.7 412.9H672M397.0 419.5H672M397.0 425.7H672" stroke="#00ffff" stroke-opacity=".3" stroke-width="1.050" fill="none"/><path d="M462 149.5h32M622 149.5h39M469 156.3h46M575 156.3h30M644 156.3h28M459 162.5h49M584 162.5h87M457 168.8h81M587 168.8h35M472 175.6h41M562 175.6h73M435 181.8h87M640 181.8h32M429 188.3h28M583 188.3h40M438 195.1h79M607 195.1h44M466 201.8h29M549 201.8h61M460 208.1h43M625 208.1h38M439 214.3h54M529 214.3h36M633 214.3h39M445 221.0h83M656 221.0h16M458 227.3h34M526 227.3h26M465 233.7h88M585 233.7h66M467 240.5h46M642 240.5h30M467 247.0h84M654 247.0h18M478 253.5h48M624 253.5h48M448 260.0h76M641 260.0h31M446 266.8h63M600 266.8h30M483 273.2h82M668 273.2h4M458 279.4h54M625 279.4h30M425 285.9h64M567 285.9h40M453 292.7h65M640 292.7h32M441 299.2h69M560 299.2h36M463 305.8h54M635 305.8h37M435 311.7h53M599 311.7h73M446 318.7h63M571 318.7h34M473 325.3h80M655 325.3h17M433 331.2h54M545 331.2h39M655 331.2h17M442 338.2h80M650 338.2h22M425 344.3h82M541 344.3h71M442 351.3h76M550 351.3h34M659 351.3h13M437 357.3h34M506 357.3h66M647 357.3h25M471 363.8h87M657 363.8h15M434 370.7h26M537 370.7h71M656 370.7h16M465 377.0h59M615 377.0h57M471 383.3h84M593 383.3h79M431 389.8h54M578 389.8h84M457 396.3h82M649 396.3h23M462 402.8h38M603 402.8h69M466 409.8h39M625 409.8h47M455 415.9h76M594 415.9h78M444 422.3h30M548 422.3h61M452 429.2h27M590 429.2h29" stroke="#00ffff" stroke-opacity=".92" stroke-width="1.200" fill="none"/><path d="M579 152.8h23M588 159.2h20M579 165.8h22M586 165.8h19M566 172.3h37M581 172.3h12M571 178.9h33M582 185.1h22M585 191.9h13M570 191.9h37M592 198.0h11M568 198.0h38M574 205.0h21M565 205.0h8M602 211.3h5M569 217.5h36M566 217.5h38M566 224.0h28M586 230.6h20M570 230.6h32M568 237.2h21M572 244.0h35M567 250.3h22M581 256.8h26M579 263.1h28M572 270.0h11M586 276.4h14M580 276.4h13M567 282.6h29M577 289.0h26M578 289.0h28M576 295.7h17M574 302.2h25M570 302.2h34M582 309.0h23M568 315.1h24M570 315.1h36M567 321.7h35M567 328.2h35M566 334.8h35M568 341.1h9M594 347.6h8M579 354.4h23M582 360.6h18M585 367.0h8M572 373.6h36M574 380.2h29M580 386.9h22M570 393.3h32M586 399.7h6M569 406.1h35M569 406.1h11M575 412.9h33M567 419.5h8M568 419.5h37M578 425.7h16" stroke="#00ffff" stroke-opacity=".5" stroke-width="1.100" fill="none"/><path d="M672 148.5H984M672 151.7H984M672 155.0H984M672 157.8H984" stroke="#00ffff" stroke-opacity=".5" stroke-width="1.100" fill="none"/><path d="M424 147.500V370L418.500 418V432M565.500 147.500V432M608 147.500V432M672 147.500V432M397 419V432M397 419H418M424 147.500H984" stroke="#00ffff" stroke-opacity=".85" stroke-width="1.100" fill="none"/><g clip-path="url(#imgB)"><path d="M673 163.0L983 164.3M673 167.7L983 169.1M673 171.5L983 172.1M673 177.2L983 178.5M673 181.7L983 182.6M673 187.4L983 186.9M673 192.9L983 194.7M673 198.8L983 200.1M673 203.3L983 204.7M673 208.1L983 206.6M673 213.2L983 212.6M673 217.5L983 218.7M673 222.0L983 224.5M673 227.6L983 230.0M673 233.0L983 232.6M673 237.0L983 237.0" stroke="#25d6d6" stroke-opacity=".95" stroke-width="1.800" fill="none"/><path d="M697 163.3h178M711 168.0h117M894 172.1h62M755 177.7h181M849 182.4h131M764 187.4h188M846 194.1h117M782 199.5h167M755 203.9h70M801 207.7h110M751 213.3h192M764 218.1h140M785 223.1h150M825 229.0h63M683 233.2h116M732 237.2h74" stroke="#00ffff" stroke-width="1.400" fill="none"/></g><rect x="673" y="161" width="310" height="80" fill="#00e0e0" opacity=".06"/><path d="M673 148V240M744 148V240M810 150L805 240M849.500 150L850.500 240M984 148V240" stroke="#19f0f0" stroke-opacity=".9" stroke-width="1.200" fill="none"/><path d="M826 162L827 172L823 184L825 196L831 208L832 218L827 228L826 240" stroke="#10e010" stroke-width="1.400" fill="none" stroke-dasharray="7 2"/><clipPath id="cC"><rect x="385" y="430" width="130" height="529"/></clipPath><clipPath id="cDt"><rect x="385" y="959" width="605" height="27"/></clipPath><clipPath id="cDr"><rect x="663" y="986" width="330" height="144"/></clipPath><clipPath id="cSparse"><rect x="385" y="986" width="278" height="110"/></clipPath><g clip-path="url(#imgC)"><g clip-path="url(#cC)"><path d="M385 432.5H515V434.2H385ZM385 436.2H515V438.0H385ZM385 439.6H515V441.1H385ZM385 443.1H515V444.7H385ZM385 446.5H515V448.1H385ZM385 450.1H515V452.0H385ZM385 453.6H515V455.5H385ZM385 457.2H515V459.0H385ZM385 460.5H515V462.2H385ZM385 464.1H515V465.9H385ZM385 467.7H515V469.2H385ZM385 471.1H515V472.9H385ZM385 474.7H515V476.3H385ZM385 478.0H515V479.6H385ZM385 481.4H515V483.1H385ZM385 485.0H515V486.5H385ZM385 488.4H515V490.2H385ZM385 491.9H515V493.7H385ZM385 495.2H515V496.9H385ZM385 498.6H515V500.1H385ZM385 502.0H515V503.6H385ZM385 505.6H515V507.5H385ZM385 509.3H515V510.9H385ZM385 512.7H515V514.5H385ZM385 516.1H515V517.9H385ZM385 519.8H515V521.6H385ZM385 523.4H515V524.9H385ZM385 526.7H515V528.5H385ZM385 530.2H515V532.0H385ZM385 533.9H515V535.7H385ZM385 537.6H515V539.3H385ZM385 541.0H515V542.8H385ZM385 544.4H515V546.0H385ZM385 547.8H515V549.5H385ZM385 551.2H515V552.9H385ZM385 554.6H515V556.4H385ZM385 558.1H515V559.8H385ZM385 561.6H515V563.2H385ZM385 565.1H515V566.8H385ZM385 568.7H515V570.5H385ZM385 572.0H515V573.8H385ZM385 575.5H515V577.4H385ZM385 579.2H515V581.0H385ZM385 582.6H515V584.1H385ZM385 585.9H515V587.6H385ZM385 589.2H515V591.0H385ZM385 592.9H515V594.6H385ZM385 596.3H515V597.9H385ZM385 599.9H515V601.7H385ZM385 603.3H515V605.1H385ZM385 606.9H515V608.7H385ZM385 610.4H515V612.1H385ZM385 614.0H515V615.5H385ZM385 617.5H515V619.3H385ZM385 620.9H515V622.5H385ZM385 624.5H515V626.1H385ZM385 628.0H515V629.7H385ZM385 631.4H515V633.1H385ZM385 635.0H515V636.6H385ZM385 638.4H515V640.2H385ZM385 642.0H515V643.7H385ZM385 645.3H515V646.9H385ZM385 648.9H515V650.6H385ZM385 652.4H515V654.1H385ZM385 655.9H515V657.7H385ZM385 659.4H515V661.0H385ZM385 663.0H515V664.8H385ZM385 666.5H515V668.0H385ZM385 669.9H515V671.7H385ZM385 673.3H515V674.9H385ZM385 676.7H515V678.2H385ZM385 680.1H515V682.0H385ZM385 683.4H515V685.0H385ZM385 686.9H515V688.5H385ZM385 690.5H515V692.2H385ZM385 693.9H515V695.5H385ZM385 697.6H515V699.4H385ZM385 701.0H515V702.6H385ZM385 704.6H515V706.3H385ZM385 708.0H515V709.9H385ZM385 711.5H515V713.2H385ZM385 714.8H515V716.6H385ZM385 718.5H515V720.2H385ZM385 722.0H515V723.7H385ZM385 725.5H515V727.3H385ZM385 729.1H515V730.7H385ZM385 732.5H515V734.0H385ZM385 736.0H515V737.6H385ZM385 739.4H515V740.9H385ZM385 743.0H515V744.6H385ZM385 746.4H515V747.9H385ZM385 750.0H515V751.6H385ZM385 753.5H515V755.4H385ZM385 757.2H515V758.8H385ZM385 760.8H515V762.4H385ZM385 764.2H515V766.1H385ZM385 767.7H515V769.5H385ZM385 771.1H515V772.8H385ZM385 774.5H515V776.1H385ZM385 778.1H515V779.8H385ZM385 781.5H515V783.2H385ZM385 785.2H515V787.0H385ZM385 788.5H515V790.2H385ZM385 791.8H515V793.6H385ZM385 795.4H515V797.2H385ZM385 798.9H515V800.7H385ZM385 802.4H515V804.3H385ZM385 805.8H515V807.6H385ZM385 809.4H515V811.0H385ZM385 812.8H515V814.4H385ZM385 816.2H515V817.8H385ZM385 819.8H515V821.4H385ZM385 823.3H515V824.9H385ZM385 826.7H515V828.3H385ZM385 830.2H515V832.0H385ZM385 833.6H515V835.2H385ZM385 837.3H515V838.9H385ZM385 840.7H515V842.4H385ZM385 844.2H515V845.9H385ZM385 847.9H515V849.5H385ZM385 851.4H515V853.3H385ZM385 854.9H515V856.7H385ZM385 858.4H515V859.9H385ZM385 862.0H515V863.6H385ZM385 865.6H515V867.4H385ZM385 869.3H515V871.0H385ZM385 872.9H515V874.4H385ZM385 876.4H515V878.3H385ZM385 880.1H515V881.6H385ZM385 883.8H515V885.4H385ZM385 887.4H515V889.0H385ZM385 891.1H515V892.9H385ZM385 894.8H515V896.5H385ZM385 898.3H515V899.9H385ZM385 902.0H515V903.5H385ZM385 905.4H515V907.1H385ZM385 908.9H515V910.5H385ZM385 912.4H515V914.2H385ZM385 915.8H515V917.3H385ZM385 919.4H515V921.1H385ZM385 923.1H515V925.0H385ZM385 926.7H515V928.3H385ZM385 930.1H515V931.8H385ZM385 933.7H515V935.5H385ZM385 937.2H515V938.7H385ZM385 940.5H515V942.2H385ZM385 944.0H515V945.6H385ZM385 947.7H515V949.3H385ZM385 951.2H515V953.0H385ZM385 954.7H515V956.3H385ZM385 958.3H515V960.0H385ZM385 961.9H515V963.6H385Z" fill="#2fd0d0" fill-opacity=".9"/><path d="M385 444.7H515V446.5H385ZM385 448.1H515V450.1H385ZM385 459.0H515V460.5H385ZM385 476.3H515V478.0H385ZM385 493.7H515V495.2H385ZM385 577.4H515V579.2H385ZM385 668.0H515V669.9H385ZM385 678.2H515V680.1H385ZM385 699.4H515V701.0H385ZM385 716.6H515V718.5H385ZM385 807.6H515V809.4H385ZM385 817.8H515V819.8H385ZM385 835.2H515V837.3H385Z" fill="#38c4c4" fill-opacity=".55"/><path d="M405 433.4h73M388 437.1h52M504 437.1h11M405 440.3h53M476 440.3h39M396 443.9h55M503 443.9h12M387 447.3h27M478 447.3h37M423 451.0h22M395 454.5h48M418 458.1h52M493 458.1h22M390 461.4h43M492 461.4h23M406 465.0h75M421 468.4h63M408 472.0h52M424 475.5h70M402 478.8h54M477 478.8h38M410 482.2h39M496 482.2h19M390 485.7h64M509 485.7h6M400 489.3h55M422 492.8h42M503 492.8h12M404 496.0h57M496 496.0h19M397 499.3h59M414 502.8h39M476 502.8h39M403 506.6h64M501 506.6h14M399 510.1h39M477 510.1h38M407 513.6h66M396 517.0h19M464 517.0h49M388 520.7h49M503 520.7h12M410 524.1h26M500 524.1h15M416 527.6h40M493 527.6h22M413 531.1h70M417 534.8h66M413 538.4h64M425 541.9h39M490 541.9h25M397 545.2h25M479 545.2h36M421 548.6h20M464 548.6h29M394 552.0h29M456 552.0h28M404 555.5h33M510 555.5h5M394 558.9h21M491 558.9h24M425 562.4h55M511 562.4h4M409 566.0h27M461 566.0h36M425 569.6h33M508 569.6h7M418 572.9h23M473 572.9h42M408 576.4h67M510 576.4h5M393 580.1h49M491 580.1h24M397 583.4h45M503 583.4h12M424 586.8h65M394 590.1h50M489 590.1h19M397 593.7h39M486 593.7h29M393 597.1h60M489 597.1h26M389 600.8h26M436 600.8h57M409 604.2h23M462 604.2h27M512 604.2h3M411 607.8h62M386 611.2h41M487 611.2h28M398 614.7h38M493 614.7h22M409 618.4h27M501 618.4h14M414 621.7h74M423 625.3h54M504 625.3h11M422 628.8h39M506 628.8h9M407 632.2h50M490 632.2h25M418 635.8h34M392 639.3h49M462 639.3h20M508 639.3h7M415 642.9h40M508 642.9h7M400 646.1h50M477 646.1h38M387 649.8h56M467 649.8h48M413 653.2h61M419 656.8h41M504 656.8h11M421 660.2h36M476 660.2h39M397 663.9h52M469 663.9h25M413 667.2h48M491 667.2h24M424 670.8h56M415 674.1h50M407 677.4h72M494 677.4h21M418 681.0h41M496 681.0h19M405 684.2h71M422 687.7h69M392 691.4h68M420 694.7h21M463 694.7h52M390 698.5h58M397 701.8h59M484 701.8h28M411 705.4h68M412 708.9h34M502 708.9h13M387 712.3h52M472 712.3h32M395 715.7h34M479 715.7h29M415 719.4h40M411 722.9h38M507 722.9h8M406 726.4h72M504 726.4h11M416 729.9h63M408 733.2h46M472 733.2h43M391 736.8h19M457 736.8h43M421 740.2h50M397 743.8h20M453 743.8h53M418 747.2h28M477 747.2h27M401 750.8h39M469 750.8h46M391 754.5h44M498 754.5h17M397 758.0h42M459 758.0h20M395 761.6h49M475 761.6h40M409 765.2h20M471 765.2h44M409 768.6h69M416 772.0h30M484 772.0h28M404 775.3h36M483 775.3h32M388 779.0h57M484 779.0h31M422 782.3h59M513 782.3h2M414 786.1h70M500 786.1h15M416 789.3h48M482 789.3h33M386 792.7h36M465 792.7h49M412 796.3h26M466 796.3h34M394 799.8h35M466 799.8h30M514 799.8h1M397 803.4h56M423 806.7h67M401 810.2h21M462 810.2h37M404 813.6h28M490 813.6h25M408 817.0h58M400 820.6h22M462 820.6h21M395 824.1h19M452 824.1h63M404 827.5h53M416 831.1h54M418 834.4h68M405 838.1h36M479 838.1h36M394 841.6h18M463 841.6h40M410 845.0h50M420 848.7h36M418 852.4h27M500 852.4h15M406 855.8h32M469 855.8h37M388 859.2h24M472 859.2h24M420 862.8h68M506 862.8h9M395 866.5h59M490 866.5h25M402 870.1h58M400 873.7h56M486 873.7h29M390 877.4h57M490 877.4h25M414 880.9h25M456 880.9h34M386 884.6h49M481 884.6h34M401 888.2h53M407 892.0h64M495 892.0h20M390 895.6h36M443 895.6h50M404 899.1h39M475 899.1h21M392 902.8h46M402 906.2h64M506 906.2h9M423 909.7h67M392 913.3h20M438 913.3h25M482 913.3h33M393 916.6h73M482 916.6h33M417 920.3h65M401 924.1h58M491 924.1h24M400 927.5h55M396 930.9h70M502 930.9h13M407 934.6h57M490 934.6h24M405 937.9h41M482 937.9h33M415 941.4h24M401 944.8h58M486 944.8h29M399 948.5h74M498 948.5h17M421 952.1h67M418 955.5h57M394 959.1h52M499 959.1h16M409 962.7h71M505 962.7h10" stroke="#00ffff" stroke-opacity=".95" stroke-width="1.5" fill="none"/></g><g clip-path="url(#cDt)"><path d="M385 960.5H985V962.0H385ZM385 964.1H985V965.7H385ZM385 967.7H985V969.2H385ZM385 971.0H985V972.3H385ZM385 974.5H985V975.8H385ZM385 978.0H985V979.4H385ZM385 981.5H985V982.9H385ZM385 985.1H985V986.5H385ZM385 988.5H985V990.0H385Z" fill="#2fd0d0" fill-opacity=".9"/><path d="" fill="#38c4c4" fill-opacity=".55"/><path d="M425 961.2h41M537 961.2h25M641 961.2h46M718 961.2h66M841 961.2h71M981 961.2h4M413 964.9h32M513 964.9h44M607 964.9h67M702 964.9h34M793 964.9h22M866 964.9h63M976 964.9h9M421 968.4h63M510 968.4h39M570 968.4h20M627 968.4h67M764 968.4h25M815 968.4h40M926 968.4h53M410 971.7h68M540 971.7h29M628 971.7h43M687 971.7h37M760 971.7h54M847 971.7h52M959 971.7h26M390 975.2h72M516 975.2h38M582 975.2h75M717 975.2h60M815 975.2h36M892 975.2h26M975 975.2h10M423 978.7h38M521 978.7h31M605 978.7h34M711 978.7h34M816 978.7h57M917 978.7h68M388 982.2h42M463 982.2h43M583 982.2h35M678 982.2h56M765 982.2h41M830 982.2h69M930 982.2h42M407 985.8h24M504 985.8h23M565 985.8h39M667 985.8h56M760 985.8h69M906 985.8h19M982 985.8h3M409 989.3h73M561 989.3h75M676 989.3h65M799 989.3h58M937 989.3h22" stroke="#00ffff" stroke-opacity=".95" stroke-width="1.2" fill="none"/></g><g clip-path="url(#cDr)"><path d="M663 986.5H985V987.6H663ZM663 990.0H985V991.1H663ZM663 993.3H985V994.4H663ZM663 996.8H985V998.0H663ZM663 1000.5H985V1001.6H663ZM663 1003.8H985V1004.8H663ZM663 1007.1H985V1008.2H663ZM663 1010.5H985V1011.7H663ZM663 1013.7H985V1014.9H663ZM663 1017.0H985V1018.3H663ZM663 1020.4H985V1021.6H663ZM663 1023.7H985V1024.8H663ZM663 1027.0H985V1028.0H663ZM663 1030.5H985V1031.8H663ZM663 1034.0H985V1035.2H663ZM663 1037.3H985V1038.5H663ZM663 1040.6H985V1041.8H663ZM663 1043.9H985V1045.0H663ZM663 1047.5H985V1048.7H663ZM663 1050.8H985V1051.9H663ZM663 1054.2H985V1055.5H663ZM663 1057.9H985V1059.2H663ZM663 1061.5H985V1062.7H663ZM663 1064.8H985V1066.0H663ZM663 1068.4H985V1069.6H663ZM663 1071.7H985V1072.8H663ZM663 1075.2H985V1076.3H663ZM663 1078.8H985V1080.1H663ZM663 1082.3H985V1083.5H663ZM663 1085.7H985V1087.1H663ZM663 1089.4H985V1090.7H663ZM663 1093.0H985V1094.2H663ZM663 1096.4H985V1097.7H663ZM663 1099.7H985V1100.8H663ZM663 1103.0H985V1104.3H663ZM663 1106.4H985V1107.7H663ZM663 1109.8H985V1111.1H663ZM663 1113.2H985V1114.4H663Z" fill="#2fd0d0" fill-opacity=".9"/><path d="M663 1028.0H985V1030.5H663ZM663 1062.7H985V1064.8H663Z" fill="#38c4c4" fill-opacity=".55"/><path d="M703 987.0h30M772 987.0h26M838 987.0h60M919 987.0h28M695 990.5h60M821 990.5h25M891 990.5h19M981 990.5h4M684 993.9h24M775 993.9h35M858 993.9h25M935 993.9h25M981 993.9h4M665 997.4h30M740 997.4h50M835 997.4h66M923 997.4h62M687 1001.0h67M832 1001.0h42M890 1001.0h27M985 1001.0h0M667 1004.3h35M780 1004.3h55M905 1004.3h21M968 1004.3h17M683 1007.6h55M810 1007.6h72M934 1007.6h47M673 1011.1h39M755 1011.1h45M839 1011.1h43M926 1011.1h21M679 1014.3h31M731 1014.3h39M806 1014.3h46M881 1014.3h61M663 1017.7h52M793 1017.7h39M885 1017.7h39M959 1017.7h26M693 1021.0h21M735 1021.0h32M800 1021.0h63M906 1021.0h67M702 1024.3h65M804 1024.3h36M908 1024.3h63M688 1027.5h49M813 1027.5h54M884 1027.5h71M680 1031.1h57M815 1031.1h70M906 1031.1h63M680 1034.6h25M741 1034.6h60M821 1034.6h25M914 1034.6h56M701 1037.9h50M826 1037.9h30M898 1037.9h49M664 1041.2h43M746 1041.2h56M878 1041.2h46M984 1041.2h1M686 1044.5h30M753 1044.5h27M819 1044.5h52M919 1044.5h40M682 1048.1h74M792 1048.1h58M880 1048.1h33M976 1048.1h9M692 1051.4h43M789 1051.4h50M918 1051.4h67M667 1054.9h35M773 1054.9h20M853 1054.9h50M954 1054.9h31M667 1058.5h63M759 1058.5h29M838 1058.5h53M914 1058.5h62M678 1062.1h72M811 1062.1h35M917 1062.1h59M673 1065.4h35M739 1065.4h25M811 1065.4h34M878 1065.4h34M960 1065.4h25M685 1069.0h60M794 1069.0h56M925 1069.0h60M694 1072.3h31M770 1072.3h39M872 1072.3h72M701 1075.7h24M801 1075.7h55M877 1075.7h69M968 1075.7h17M665 1079.5h56M741 1079.5h20M813 1079.5h74M946 1079.5h39M670 1082.9h48M756 1082.9h46M831 1082.9h58M931 1082.9h46M685 1086.4h26M746 1086.4h37M843 1086.4h72M700 1090.0h19M766 1090.0h52M878 1090.0h53M701 1093.6h20M743 1093.6h68M888 1093.6h19M925 1093.6h60M695 1097.1h18M733 1097.1h63M874 1097.1h66M981 1097.1h4M686 1100.2h48M771 1100.2h56M872 1100.2h31M976 1100.2h9M676 1103.7h32M765 1103.7h33M847 1103.7h33M952 1103.7h29M690 1107.0h63M803 1107.0h22M890 1107.0h32M951 1107.0h34M703 1110.5h40M766 1110.5h63M895 1110.5h37M693 1113.8h45M806 1113.8h19M872 1113.8h40M931 1113.8h54" stroke="#00ffff" stroke-opacity=".95" stroke-width="1.15" fill="none"/></g><g clip-path="url(#cSparse)"><path d="M385 988.0H665V989.3H385ZM385 992.9H665V994.2H385ZM385 997.7H665V998.8H385ZM385 1004.3H665V1005.4H385ZM385 1010.2H665V1011.4H385ZM385 1016.9H665V1018.2H385ZM385 1022.6H665V1023.8H385ZM385 1027.9H665V1029.2H385ZM385 1034.6H665V1035.9H385ZM385 1040.5H665V1041.8H385ZM385 1046.2H665V1047.2H385ZM385 1052.9H665V1054.1H385ZM385 1058.7H665V1059.8H385ZM385 1063.7H665V1064.9H385ZM385 1069.9H665V1071.1H385ZM385 1075.2H665V1076.4H385ZM385 1081.7H665V1082.8H385ZM385 1088.2H665V1089.5H385Z" fill="#2fd0d0" fill-opacity=".9"/><path d="" fill="#38c4c4" fill-opacity=".55"/><path d="M422 988.6h37M535 988.6h26M623 988.6h42M414 993.5h72M531 993.5h39M593 993.5h34M387 998.2h35M449 998.2h25M524 998.2h49M624 998.2h41M388 1004.9h36M488 1004.9h71M607 1004.9h27M424 1010.8h44M522 1010.8h66M634 1010.8h29M401 1017.6h21M448 1017.6h28M538 1017.6h30M585 1017.6h31M392 1023.2h19M446 1023.2h20M498 1023.2h53M591 1023.2h45M408 1028.6h42M500 1028.6h44M581 1028.6h70M392 1035.2h47M518 1035.2h34M578 1035.2h59M396 1041.1h24M480 1041.1h38M569 1041.1h46M405 1046.7h33M491 1046.7h54M590 1046.7h23M660 1046.7h5M388 1053.5h64M482 1053.5h65M614 1053.5h33M423 1059.2h46M515 1059.2h35M619 1059.2h46M417 1064.3h74M566 1064.3h57M392 1070.5h64M491 1070.5h32M598 1070.5h19M421 1075.8h71M549 1075.8h22M630 1075.8h24M413 1082.3h61M553 1082.3h54M630 1082.3h35M420 1088.9h50M547 1088.9h54M648 1088.9h17" stroke="#00ffff" stroke-opacity=".95" stroke-width="1.1" fill="none"/></g><rect x="418.500" y="432" width="95" height="113.700" fill="#c4ecec" opacity=".36"/><rect x="533" y="960" width="42" height="170" fill="#30e8e8" opacity=".33"/><rect x="663" y="960" width="45" height="170" fill="#30e8e8" opacity=".33"/><rect x="790" y="960" width="55" height="170" fill="#30e8e8" opacity=".33"/></g><path d="M418.500 432V545.700H509M397 432V1000L390 1060L393 1087" stroke="#00ffff" stroke-opacity=".9" stroke-width="1.200" fill="none"/><path d="M533 960L530 1100M575 960L573 1100M663 960V1126M708 960L711 1112M790 960L787 1112M845 960L848 1112M975 960L972 1126" stroke="#19f0f0" stroke-opacity=".9" stroke-width="1.200" fill="none"/><path d="M393 1088H573M393 1094.500H530M393 1099.500H573M530 1096H573M530 1100.500H573M573 1090H662M573 1097H662M393 1087V1099.500M663 1117H972M663 1121.500H972M663 1126H972" stroke="#00ffff" stroke-opacity=".6" stroke-width="1.100" fill="none"/><path d="M556 962L553 990L555 1020L551 1050L553 1078H575M686 962L683 1000L687 1040L684 1085L686 1126M818 962L822 985L817 1015L814 1050L818 1085L812 1100" stroke="#14e014" stroke-width="1.300" fill="none" stroke-dasharray="6 2"/><path d="M700 1010H760L790 1009" stroke="#14d014" stroke-width="1.100" fill="none" stroke-dasharray="5 3"/><path d="M396.500 432v10M396.500 500v16M396.500 624v12M396.500 790v14M389.500 1040v14" stroke="#12b012" stroke-width="1.300"/><path d="M388.500 146.500V1129.500M984.500 146.500V1129.500" fill="none" stroke="#2a2a2a" stroke-width="1"/><path d="M388 146.500H985M388 1129.500H985" fill="none" stroke="#6a6a6a" stroke-width="1"/></g></svg>
<div class="" style="position:absolute;left:1076px;top:1162px;width:9px;height:9px;background:radial-gradient(circle at 1px 1px,#c4c4c4 0.8px,transparent 1px) 0 0/3px 3px;clip-path:polygon(100% 0,100% 100%,0 100%);"></div>
<div class="" style="position:absolute;left:259px;top:625px;width:1px;height:18px;background:repeating-linear-gradient(#c0c0c0 0 1px,transparent 1px 3px);"></div>
<div class="" style="position:absolute;left:1090px;top:625px;width:1px;height:18px;background:repeating-linear-gradient(#c0c0c0 0 1px,transparent 1px 3px);"></div>
<!-- Editor dock -->
<div class="t " style="left:1097.00px;top:129.30px;font-size:15.30px;line-height:21px;height:21px;color:#000;letter-spacing:0.089px;">Editor</div>
<svg style="left:1571.5px;top:133px" width="26" height="11" viewBox="0 0 26 11" fill="none" stroke="#6a6a6a"><rect x="0.5" y="0.5" width="10" height="10" rx="2"/><rect x="4.500" y="2.500" width="4" height="4" stroke-width="0.900"/><rect x="2.500" y="4.500" width="4" height="4" fill="#f0f0f0" stroke-width="0.900"/><rect x="14.500" y="0.500" width="10" height="10" rx="2"/><path d="M17 3l5 5M22 3l-5 5" stroke="#3a3a3a" stroke-width="1.700"/></svg>
<div class="t " style="left:1107.60px;top:167.50px;font-size:11.00px;line-height:15px;height:15px;color:#000;letter-spacing:-0.632px;font-family:'DejaVu Sans Condensed','DejaVu Sans','Liberation Sans',sans-serif;">Zoom</div>
<div class="" style="position:absolute;left:1141px;top:163px;width:60px;height:22px;border:1px solid #adadad;border-radius:3px;background:linear-gradient(#f8f8f8,#e8e8e8);box-sizing:border-box;"></div>
<div class="t " style="left:1146.50px;top:167.30px;font-size:11.00px;line-height:15px;height:15px;color:#000;letter-spacing:-0.042px;font-family:'DejaVu Sans Condensed','DejaVu Sans','Liberation Sans',sans-serif;">1 : 1</div>
<svg style="left:1181px;top:171px" width="11" height="7" viewBox="0 0 11 7"><path d="M0.300 0.500H10.300L5.300 5.800z" fill="#4c4c4c"/></svg>
<svg style="left:1222px;top:163px" width="20" height="21" viewBox="0 0 20 21"><path d="M10 0.500l3.600 4.200h-2.500v4.400h4.400V6.600l4.200 3.600-4.200 3.600v-2.500h-4.400v4.400h2.500L10 19.900l-3.600-4.200h2.500v-4.400H4.500v2.500L0.300 10.200l4.200-3.600v2.500h4.400V4.700H6.400z" fill="#222"/></svg>
<svg style="left:1261px;top:164px" width="20" height="20" viewBox="0 0 20 20"><path d="M2.600 0.500h11.600l4.800 4.800v12a2.100 2.100 0 0 1-2.100 2.100H2.600a2.100 2.100 0 0 1-2.100-2.100V2.600a2.100 2.100 0 0 1 2.100-2.100z" fill="#111"/><rect x="2.800" y="2.700" width="10.200" height="4.300" fill="#f0f0f0"/><circle cx="9.700" cy="13.200" r="3.100" fill="#f0f0f0"/></svg>
<svg style="left:1299px;top:166px" width="22" height="14" viewBox="0 0 22 14"><path d="M0.500 1l1 8.200 7.800-2.400-3-1.900c4.600-2.700 10.500-1 12.600 4.700l2.500-.9C18.600 1.500 10.600-1.200 4 3.400z" fill="#111"/></svg>
<div class="" style="position:absolute;left:1104px;top:218px;width:239px;height:945px;background:#000;border:1px solid #f9f9f9;box-sizing:border-box;"></div>
<div class="" style="position:absolute;left:1350px;top:218px;width:238px;height:945px;background:#000;border:1px solid #f9f9f9;box-sizing:border-box;"></div>
<div class="" style="position:absolute;left:1587px;top:1187px;width:10px;height:10px;background:radial-gradient(circle at 1px 1px,#b4b4b4 0.8px,transparent 1px) 0 0/3px 3px;clip-path:polygon(100% 0,100% 100%,0 100%);"></div>
<!-- dialog -->
<div class="" style="position:absolute;left:507px;top:237px;width:587px;height:726px;background:#fdf8f1;"></div>
<div class="" style="position:absolute;left:508px;top:238px;width:585px;height:724px;background:#f0f0f0;border:1px solid #1883d7;box-sizing:border-box;"></div>
<div class="" style="position:absolute;left:508px;top:238px;width:585px;height:38px;background:#0078d7;"></div>
<svg style="left:518px;top:247px" width="20" height="21" viewBox="0 0 20 21">
<polygon points="2,6 9.500,1.500 9.500,11 2,15" fill="#2aa0bd"/><polygon points="9.500,1.500 9.500,11 5,13.500" fill="#b5d640"/>
<polygon points="5,14 18.500,6 18.500,15.500 5,15.500" fill="#2aa0bd"/><polygon points="9.800,11 18.500,6 13,15.500 8,15.500" fill="#5cc0c8"/>
<polygon points="6.500,15.500 10,20 18.500,15.800" fill="#b5d640"/></svg>
<div class="t " style="left:543.00px;top:247.00px;font-size:15.00px;line-height:21px;height:21px;color:#fff;letter-spacing:-0.244px;">Run Seamline Generation</div>
<svg style="left:1064px;top:250px" width="14" height="14" viewBox="0 0 14 14"><path d="M1 1L13 13M13 1L1 13" stroke="#fff" stroke-width="1.300" fill="none"/></svg>
<div class="t " style="left:521.70px;top:292.50px;font-size:11.00px;line-height:15px;height:15px;color:#000;letter-spacing:0.021px;font-weight:bold;font-family:'DejaVu Sans Condensed','DejaVu Sans','Liberation Sans',sans-serif;">Seamline Options</div>
<div class="t " style="left:521.50px;top:314.80px;font-size:11.00px;line-height:15px;height:15px;color:#000;letter-spacing:-0.103px;font-family:'DejaVu Sans Condensed','DejaVu Sans','Liberation Sans',sans-serif;">Method</div>
<svg style="left:522.5px;top:335.6px" width="17" height="17" viewBox="0 0 17 17"><circle cx="8.500" cy="8.500" r="7.300" fill="#fff" stroke="#8f8f8f" stroke-width="1"/><circle cx="8.500" cy="8.500" r="6.200" fill="none" stroke="#e2e2e2" stroke-width="1"/></svg>
<div class="t " style="left:545.00px;top:336.40px;font-size:11.00px;line-height:15px;height:15px;color:#000;letter-spacing:-0.164px;font-family:'DejaVu Sans Condensed','DejaVu Sans','Liberation Sans',sans-serif;">Most-nadir</div>
<svg style="left:522.5px;top:361px" width="17" height="17" viewBox="0 0 17 17"><circle cx="8.500" cy="8.500" r="7.300" fill="#fff" stroke="#8f8f8f" stroke-width="1"/><circle cx="8.500" cy="8.500" r="6.200" fill="none" stroke="#e2e2e2" stroke-width="1"/></svg>
<div class="t " style="left:545.00px;top:361.80px;font-size:11.00px;line-height:15px;height:15px;color:#000;letter-spacing:-0.205px;font-family:'DejaVu Sans Condensed','DejaVu Sans','Liberation Sans',sans-serif;">Smart(Strip only)</div>
<svg style="left:522.5px;top:386px" width="17" height="17" viewBox="0 0 17 17"><circle cx="8.500" cy="8.500" r="7.300" fill="#fff" stroke="#8f8f8f" stroke-width="1"/><circle cx="8.500" cy="8.500" r="6.200" fill="none" stroke="#e2e2e2" stroke-width="1"/></svg>
<div class="t " style="left:545.00px;top:386.80px;font-size:11.00px;line-height:15px;height:15px;color:#000;letter-spacing:-0.287px;font-family:'DejaVu Sans Condensed','DejaVu Sans','Liberation Sans',sans-serif;">Smart</div>
<svg style="left:522.5px;top:411px" width="17" height="17" viewBox="0 0 17 17"><circle cx="8.500" cy="8.500" r="7.300" fill="#fff" stroke="#8f8f8f" stroke-width="1"/><circle cx="8.500" cy="8.500" r="6.200" fill="none" stroke="#e2e2e2" stroke-width="1"/><circle cx="8.500" cy="8.500" r="3.700" fill="#3c3c3c"/></svg>
<div class="t " style="left:545.00px;top:411.80px;font-size:11.00px;line-height:15px;height:15px;color:#000;letter-spacing:-0.422px;font-family:'DejaVu Sans Condensed','DejaVu Sans','Liberation Sans',sans-serif;">Block Seams</div>
<div class="t " style="left:521.50px;top:440.80px;font-size:11.00px;line-height:15px;height:15px;color:#000;letter-spacing:-0.191px;font-family:'DejaVu Sans Condensed','DejaVu Sans','Liberation Sans',sans-serif;">Exclusions:</div>
<div class="" style="position:absolute;left:581px;top:434px;width:412px;height:26px;background:#fff;border:1px solid #a6a6a6;border-radius:3px;box-sizing:border-box;"></div>
<div class="" style="position:absolute;left:999px;top:436px;width:80px;height:22px;background:linear-gradient(#f6f6f6,#e9e9e9);border:1px solid #adadad;border-radius:3px;box-sizing:border-box;"></div>
<div class="t " style="left:1033.00px;top:438.80px;font-size:11.00px;line-height:15px;height:15px;color:#000;letter-spacing:0.191px;font-family:'DejaVu Sans Condensed','DejaVu Sans','Liberation Sans',sans-serif;">...</div>
<div class="t " style="left:521.50px;top:472.80px;font-size:11.00px;line-height:15px;height:15px;color:#000;letter-spacing:0.046px;font-family:'DejaVu Sans Condensed','DejaVu Sans','Liberation Sans',sans-serif;">Buffer:</div>
<div class="" style="position:absolute;left:581px;top:467px;width:95px;height:25px;background:#fff;border:1px solid #a6a6a6;border-radius:3px;box-sizing:border-box;"></div>
<div class="" style="position:absolute;left:658px;top:468px;width:17px;height:23px;background:linear-gradient(#f6f6f6,#e6e6e6);border-left:1px solid #c8c8c8;border-radius:0 2px 2px 0;"></div>
<svg style="left:661px;top:471px" width="12" height="17" viewBox="0 0 12 17"><path d="M1 6L5.800 0.800L10.600 6z" fill="#4a4a4a"/><path d="M1.500 11L5.800 15.500L10.100 11z" fill="#8c8c8c"/></svg>
<div class="t " style="left:599.50px;top:472.80px;font-size:11.00px;line-height:15px;height:15px;color:#000;letter-spacing:-0.156px;font-family:'DejaVu Sans Condensed','DejaVu Sans','Liberation Sans',sans-serif;">0.0 metres</div>
<div class="t " style="left:533.00px;top:511.80px;font-size:11.00px;line-height:15px;height:15px;color:#000;letter-spacing:-0.041px;font-family:'DejaVu Sans Condensed','DejaVu Sans','Liberation Sans',sans-serif;">Job Settings</div>
<div class="" style="position:absolute;left:534px;top:532px;width:534px;height:376px;background:#ebebeb;border:1px solid #d6d6d6;box-sizing:border-box;"></div>
<div class="t " style="left:546.50px;top:544.20px;font-size:11.00px;line-height:15px;height:15px;color:#000;letter-spacing:0.321px;font-family:'DejaVu Sans Condensed','DejaVu Sans','Liberation Sans',sans-serif;">Type:</div>
<svg style="left:624.5px;top:543px" width="17" height="17" viewBox="0 0 17 17"><circle cx="8.500" cy="8.500" r="7.300" fill="#fff" stroke="#8f8f8f" stroke-width="1"/><circle cx="8.500" cy="8.500" r="6.200" fill="none" stroke="#e2e2e2" stroke-width="1"/></svg>
<div class="t " style="left:647.00px;top:544.60px;font-size:11.00px;line-height:15px;height:15px;color:#000;letter-spacing:-0.225px;font-family:'DejaVu Sans Condensed','DejaVu Sans','Liberation Sans',sans-serif;">Local</div>
<svg style="left:684.5px;top:543px" width="17" height="17" viewBox="0 0 17 17"><circle cx="8.500" cy="8.500" r="7.300" fill="#fff" stroke="#8f8f8f" stroke-width="1"/><circle cx="8.500" cy="8.500" r="6.200" fill="none" stroke="#e2e2e2" stroke-width="1"/><circle cx="8.500" cy="8.500" r="3.700" fill="#3c3c3c"/></svg>
<div class="t " style="left:707.40px;top:543.80px;font-size:11.00px;line-height:15px;height:15px;color:#000;letter-spacing:-0.161px;font-family:'DejaVu Sans Condensed','DejaVu Sans','Liberation Sans',sans-serif;">Cluster</div>
<div class="t " style="left:546.50px;top:574.50px;font-size:11.00px;line-height:15px;height:15px;color:#000;letter-spacing:-0.407px;font-family:'DejaVu Sans Condensed','DejaVu Sans','Liberation Sans',sans-serif;">Name:</div>
<div class="" style="position:absolute;left:624px;top:568px;width:323px;height:26px;background:#fff;border:1px solid #a6a6a6;border-radius:3px;box-sizing:border-box;"></div>
<div class="t " style="left:626.30px;top:574.50px;font-size:11.00px;line-height:15px;height:15px;color:#000;letter-spacing:-0.223px;font-family:'DejaVu Sans Condensed','DejaVu Sans','Liberation Sans',sans-serif;">Mosaicker.Seamlines</div>
<div class="t " style="left:546.50px;top:607.50px;font-size:11.00px;line-height:15px;height:15px;color:#000;letter-spacing:0.030px;font-family:'DejaVu Sans Condensed','DejaVu Sans','Liberation Sans',sans-serif;">Priority:</div>
<div class="" style="position:absolute;left:624px;top:602px;width:323px;height:25px;background:#efefef;border:1px solid #b4b4b4;border-radius:3px;box-sizing:border-box;"></div>
<div class="" style="position:absolute;left:929px;top:603px;width:17px;height:23px;border-left:1px solid #cfcfcf;"></div>
<svg style="left:932px;top:606px" width="12" height="17" viewBox="0 0 12 17"><path d="M1 6L5.800 0.800L10.600 6z" fill="#b4b4b4"/><path d="M1.500 11L5.800 15.500L10.100 11z" fill="#c4c4c4"/></svg>
<div class="t " style="left:628.50px;top:607.50px;font-size:11.00px;line-height:15px;height:15px;color:#7a7a7a;font-family:'DejaVu Sans Condensed','DejaVu Sans','Liberation Sans',sans-serif;">0</div>
<div class="cb" style="left:954.500px;top:606.500px;border-color:#8f8f8f;width:14.500px;height:14.500px"><svg width="15" height="15" viewBox="0 0 15 15"><path d="M2.200 7.300L6 12.400L12.600 2.400" fill="none" stroke="#000" stroke-width="2.200" stroke-linejoin="miter"/></svg></div>
<div class="t " style="left:976.60px;top:607.50px;font-size:11.00px;line-height:15px;height:15px;color:#000;letter-spacing:0.007px;font-family:'DejaVu Sans Condensed','DejaVu Sans','Liberation Sans',sans-serif;">Auto</div>
<div class="t " style="left:546.50px;top:641.70px;font-size:11.00px;line-height:15px;height:15px;color:#000;letter-spacing:-0.157px;font-family:'DejaVu Sans Condensed','DejaVu Sans','Liberation Sans',sans-serif;">Group:</div>
<div class="" style="position:absolute;left:624px;top:635px;width:323px;height:26px;background:#fff;border:1px solid #a6a6a6;border-radius:3px;box-sizing:border-box;"></div>
<div class="t " style="left:626.30px;top:641.70px;font-size:11.00px;line-height:15px;height:15px;color:#000;letter-spacing:-0.162px;font-family:'DejaVu Sans Condensed','DejaVu Sans','Liberation Sans',sans-serif;">Mosaicker.Seamlines.CNM</div>
<div class="" style="position:absolute;left:912px;top:926px;width:80px;height:22px;background:linear-gradient(#f2f7fc,#e3eef9);border:1px solid #3c8fdd;border-radius:3px;box-sizing:border-box;"></div>
<div class="t " style="left:944.70px;top:930.10px;font-size:11.00px;line-height:15px;height:15px;color:#000;letter-spacing:0.112px;font-family:'DejaVu Sans Condensed','DejaVu Sans','Liberation Sans',sans-serif;">OK</div>
<div class="" style="position:absolute;left:999px;top:926px;width:80px;height:22px;background:linear-gradient(#f6f6f6,#e9e9e9);border:1px solid #adadad;border-radius:3px;box-sizing:border-box;"></div>
<div class="t " style="left:1022.70px;top:930.10px;font-size:11.00px;line-height:15px;height:15px;color:#000;letter-spacing:-0.255px;font-family:'DejaVu Sans Condensed','DejaVu Sans','Liberation Sans',sans-serif;">Cancel</div>
</div>
</body></html>
